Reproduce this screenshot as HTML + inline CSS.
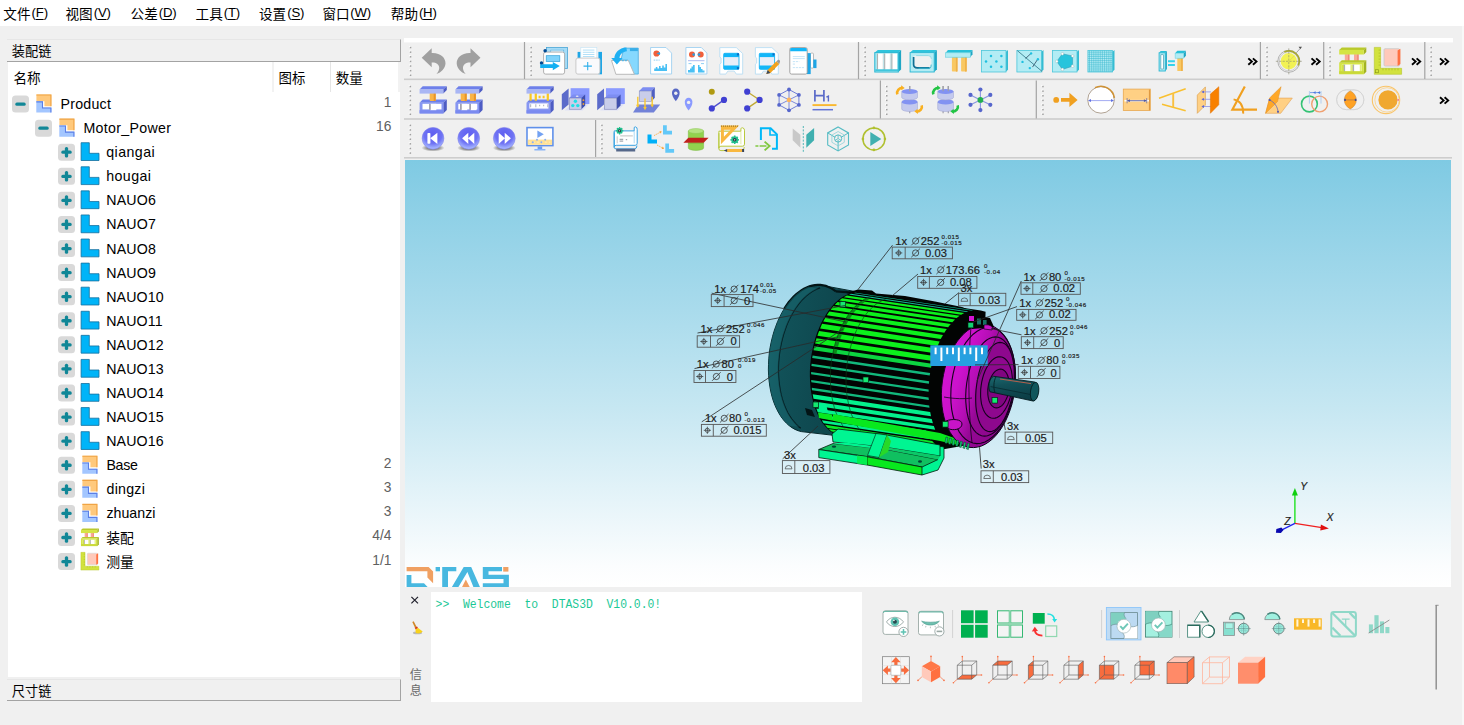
<!DOCTYPE html>
<html><head><meta charset="utf-8"><title>DTAS3D</title>
<style>
html,body{margin:0;padding:0;}
body{width:1464px;height:725px;overflow:hidden;background:#f0f0f0;position:relative;font-family:"Liberation Sans",sans-serif;font-size:13.4px;color:#000;}
.abs{position:absolute;}
#menubar{position:absolute;left:0;top:0;width:1464px;height:25.5px;background:#fff;}
.mi{position:absolute;top:5.2px;font-size:13.2px;line-height:16px;letter-spacing:-0.2px;white-space:nowrap;}
.mi u{text-decoration-thickness:1px;text-underline-offset:1.5px;}
#dock-title{position:absolute;left:7px;top:39px;width:393px;height:21px;background:#f0f0f0;border-bottom:1.5px solid #a3a3a3;border-right:1px solid #a3a3a3;border-top:1px solid #e6e6e6;box-sizing:content-box;}
#tree{position:absolute;left:8px;top:62px;width:392px;height:615px;background:#fff;}
#dock-title2{position:absolute;left:7px;top:679px;width:393px;height:20px;background:#f0f0f0;border-bottom:1.5px solid #a3a3a3;border-right:1px solid #a3a3a3;border-top:1px solid #e6e6e6;}
.tl{position:absolute;font-size:14.2px;line-height:18px;white-space:nowrap;color:#000;}
.tn{position:absolute;right:1072.6px;font-size:13.8px;line-height:18px;color:#606060;white-space:nowrap;}
#viewport{position:absolute;left:405px;top:160px;width:1046px;height:427px;background:linear-gradient(180deg,#7fcae3 0%,#8ed0e6 12%,#a9dbec 35%,#c6e7f2 58%,#e6f4f9 80%,#fbfdfe 95%,#ffffff 100%);overflow:hidden;}
#console{position:absolute;left:431px;top:591.5px;width:431px;height:110px;background:#fff;}
#console span{position:absolute;left:4.6px;top:5.4px;font-family:"Liberation Mono",monospace;font-size:11.4px;line-height:12px;color:#1cc896;white-space:pre;transform:scaleY(1.2);transform-origin:0 0;}
svg{position:absolute;left:0;top:0;overflow:visible;}
</style></head><body>
<div class="abs" style="left:1462px;top:26px;width:2px;height:699px;background:#f8f8f8"></div>
<div id="menubar"><span class="mi" style="left:31.6px">(<u>F</u>)</span><span class="mi" style="left:93.7px">(<u>V</u>)</span><span class="mi" style="left:158.7px">(<u>D</u>)</span><span class="mi" style="left:223.7px">(<u>T</u>)</span><span class="mi" style="left:287.2px">(<u>S</u>)</span><span class="mi" style="left:350.2px">(<u>W</u>)</span><span class="mi" style="left:418.9px">(<u>H</u>)</span></div>
<div id="dock-title"></div>
<div id="tree"></div>
<div id="dock-title2"></div>
<div id="viewport">
<svg width="1046" height="427" viewBox="405 160 1046 427" style="position:absolute;left:0;top:0"><defs>
<linearGradient id="gcov" x1="0" y1="0" x2="1" y2="0.15"><stop offset="0" stop-color="#176067"/><stop offset="0.18" stop-color="#115158"/><stop offset="0.6" stop-color="#0e464d"/><stop offset="1" stop-color="#0b3c43"/></linearGradient>
<linearGradient id="gfl" x1="0" y1="0.15" x2="1" y2="0.7"><stop offset="0" stop-color="#d416d4"/><stop offset="0.3" stop-color="#cc12cc"/><stop offset="0.48" stop-color="#b40eb4"/><stop offset="0.6" stop-color="#940894"/><stop offset="1" stop-color="#880688"/></linearGradient>
<linearGradient id="gfl2" x1="0" y1="0" x2="1" y2="1"><stop offset="0" stop-color="#b40cb4"/><stop offset="0.5" stop-color="#900890"/><stop offset="1" stop-color="#840684"/></linearGradient>
<linearGradient id="gsh" x1="0" y1="0" x2="0.25" y2="1"><stop offset="0" stop-color="#1d6a70"/><stop offset="0.4" stop-color="#125058"/><stop offset="1" stop-color="#0c3e46"/></linearGradient>
</defs>
<path d="M819.3 284.9 L816.0 285.0 L812.7 285.5 L809.3 286.4 L806.0 287.8 L802.7 289.5 L799.5 291.7 L796.3 294.2 L793.2 297.2 L790.3 300.4 L787.4 304.0 L784.7 308.0 L782.2 312.2 L779.9 316.7 L777.7 321.4 L775.8 326.3 L774.0 331.4 L772.5 336.7 L771.2 342.1 L770.1 347.6 L769.3 353.2 L768.8 358.8 L768.5 364.4 L768.4 369.9 L768.6 375.4 L769.1 380.8 L769.8 386.1 L770.7 391.2 L771.9 396.1 L773.3 400.8 L775.0 405.3 L776.9 409.5 L779.0 413.4 L781.2 416.9 L783.7 420.2 L786.3 423.0 L789.1 425.6 L792.0 427.7 L795.0 429.4 L798.1 430.7 L801.3 431.6 L844.7 436.6 L847.9 436.5 L851.0 436.0 L854.2 435.1 L857.3 433.7 L860.4 432.0 L863.5 429.9 L866.5 427.3 L869.4 424.5 L872.2 421.3 L874.9 417.7 L877.4 413.9 L879.8 409.7 L882.1 405.3 L884.1 400.7 L886.0 395.8 L887.7 390.8 L889.1 385.6 L890.4 380.3 L891.4 374.9 L892.2 369.5 L892.7 364.0 L893.1 358.5 L893.1 353.1 L893.0 347.7 L892.6 342.4 L891.9 337.3 L891.0 332.3 L889.9 327.5 L888.6 322.9 L887.1 318.5 L885.3 314.4 L883.4 310.6 L881.3 307.1 L879.0 304.0 L876.5 301.2 L873.9 298.7 L871.2 296.7 L868.3 295.0 L865.4 293.7 L862.4 292.9 Z" fill="url(#gcov)" stroke="#06282c" stroke-width="1"/>
<path d="M835.8 291.3 L833.4 289.6 L830.9 288.1 L828.4 286.9 L825.8 285.9 L823.1 285.3 L820.4 284.9 L817.7 284.9 L815.0 285.1 L812.2 285.6 L809.5 286.4 L806.7 287.4 L804.0 288.8 L801.3 290.4 L798.7 292.3 L796.1 294.4 L793.5 296.8 L791.1 299.5 L788.7 302.3 L786.5 305.4 L784.3 308.7" fill="none" stroke="#031416" stroke-width="2.2"/>
<path d="M835.8 291.3 L864.4 293.4" stroke="#031416" stroke-width="2.2"/>
<path d="M820.1 287.9 L817.3 288.9 L814.5 290.2 L811.8 291.8 L809.0 293.7 L806.4 295.8 L803.8 298.2 L801.2 300.9 L798.8 303.8 L796.4 307.0 L794.2 310.4 L792.1 314.0 L790.1 317.7 L788.2 321.7 L786.5 325.8 L785.0 330.1 L783.5 334.5 L782.3 339.0 L781.2 343.6 L780.3 348.2 L779.6 352.9 L779.0 357.7 L778.6 362.4 L778.4 367.1 L778.4 371.9 L778.6 376.5 L778.9 381.1 L779.5 385.6 L780.2 390.0 L781.0 394.2 L782.1 398.4 L783.3 402.3 L784.7 406.1 L786.3 409.7 L787.9 413.1 L789.8 416.2 L791.8 419.1 L793.9 421.8 L796.1 424.2 L798.4 426.4 L800.8 428.2" fill="none" stroke="#041c20" stroke-width="1.3"/>
<path d="M808.4 286.8 L805.6 287.9 L802.9 289.4 L800.3 291.1 L797.7 293.1 L795.1 295.3 L792.6 297.8 L790.2 300.5 L787.9 303.4 L785.6 306.6 L783.5 309.9 L781.5 313.5 L779.6 317.2 L777.8 321.1 L776.2 325.1 L774.7 329.2 L773.4 333.5 L772.2 337.9 L771.2 342.3 L770.3 346.8 L769.6 351.4 L769.0 355.9 L768.6 360.5 L768.4 365.1 L768.4 369.7 L768.5 374.2 L768.8 378.6 L769.3 383.0 L770.0 387.3 L770.8 391.4 L771.7 395.5 L772.9 399.4 L774.1 403.1 L775.6 406.7 L777.2 410.0 L778.9 413.2 L780.7 416.2 L782.7 418.9 L784.7 421.4 L786.9 423.7 L789.2 425.7 L798.9 426.8 L796.7 424.8 L794.5 422.6 L792.5 420.1 L790.5 417.4 L788.7 414.4 L787.0 411.3 L785.5 407.9 L784.1 404.4 L782.8 400.7 L781.7 396.8 L780.7 392.8 L779.9 388.6 L779.3 384.4 L778.8 380.0 L778.5 375.6 L778.4 371.1 L778.4 366.6 L778.6 362.0 L779.0 357.5 L779.6 352.9 L780.3 348.4 L781.1 343.9 L782.2 339.5 L783.3 335.2 L784.7 330.9 L786.2 326.8 L787.8 322.8 L789.5 319.0 L791.4 315.3 L793.4 311.7 L795.5 308.4 L797.7 305.3 L800.0 302.3 L802.4 299.6 L804.8 297.2 L807.4 295.0 L810.0 293.0 L812.6 291.3 L815.3 289.8 L818.0 288.7 Z" fill="#1a6a72" opacity="0.5"/>
<path d="M860.3 292.5 L857.1 292.4 L853.9 292.6 L850.6 293.4 L847.3 294.5 L844.1 296.1 L840.9 298.1 L837.8 300.5 L834.7 303.3 L831.8 306.5 L829.0 310.1 L826.3 314.0 L823.8 318.2 L821.4 322.6 L819.3 327.4 L817.3 332.3 L815.5 337.5 L814.0 342.8 L812.7 348.3 L811.6 353.9 L810.8 359.5 L810.2 365.2 L809.9 370.8 L809.9 376.4 L810.1 382.0 L810.5 387.4 L811.2 392.7 L812.2 397.8 L813.4 402.8 L814.8 407.4 L816.5 411.8 L818.4 416.0 L820.4 419.8 L822.7 423.2 L825.2 426.3 L827.8 429.1 L830.5 431.4 L833.4 433.3 L836.4 434.8 L839.5 435.8 L842.7 436.5 L905.0 447.0 L945.0 449.0 L962.0 446.0 L978.0 440.0 L985.0 330.0 L985.6 311.7 L980.8 310.5 Z" fill="#020403"/>
<path d="M846 293 L858 289.5 L872 290.5 L876 293.5 L905 296 L935 301.5 L962 307 L974 312 L978 320 L960 318 L900 304 Z" fill="#020403"/>
<path d="M855.7 292.7 L973.1 310.3 L971.3 310.6 L853.8 293.1 Z" fill="#14c8a0"/>
<path d="M850.9 293.8 L968.4 311.4 L966.5 312.0 L849.0 294.5 Z" fill="#14c8a0"/>
<path d="M846.8 295.5 L964.3 313.0 L961.2 314.8 L843.7 297.2 Z" fill="#0cf01c"/>
<path d="M866.1 298.4 L869.7 298.9 L866.6 300.6 L863.0 300.1 Z" fill="#0a8a18"/>
<path d="M842.1 298.3 L959.6 315.8 L956.6 318.1 L839.2 300.6 Z" fill="#0cf01c"/>
<path d="M861.4 301.1 L865.0 301.7 L862.1 304.0 L858.4 303.4 Z" fill="#0a8a18"/>
<path d="M837.6 301.9 L955.1 319.4 L952.3 322.3 L834.8 304.7 Z" fill="#0cf01c"/>
<path d="M856.9 304.8 L860.5 305.3 L857.7 308.1 L854.1 307.6 Z" fill="#0a8a18"/>
<path d="M833.3 306.3 L950.8 323.9 L948.1 327.2 L830.6 309.7 Z" fill="#0cf01c"/>
<path d="M852.6 309.2 L856.2 309.7 L853.5 313.1 L849.9 312.5 Z" fill="#0a8a18"/>
<path d="M829.3 311.5 L946.8 329.0 L944.3 332.8 L826.8 315.3 Z" fill="#0cf01c"/>
<path d="M848.6 314.4 L852.2 314.9 L849.7 318.7 L846.1 318.2 Z" fill="#0a8a18"/>
<path d="M825.5 317.4 L943.0 334.9 L940.7 339.1 L823.2 321.6 Z" fill="#0cf01c"/>
<path d="M844.8 320.2 L848.4 320.8 L846.1 325.0 L842.5 324.5 Z" fill="#0a8a18"/>
<path d="M822.1 323.8 L939.6 341.4 L937.6 346.0 L820.1 328.4 Z" fill="#0cf01c"/>
<path d="M841.4 326.7 L845.0 327.3 L843.0 331.8 L839.4 331.3 Z" fill="#0a8a18"/>
<path d="M819.1 330.9 L936.6 348.4 L934.9 353.3 L817.4 335.7 Z" fill="#0cf01c"/>
<path d="M838.4 333.7 L842.0 334.3 L840.3 339.1 L836.6 338.6 Z" fill="#0a8a18"/>
<path d="M816.5 338.3 L934.0 355.9 L932.6 361.0 L815.1 343.4 Z" fill="#0cf01c"/>
<path d="M835.8 341.2 L839.4 341.7 L838.0 346.8 L834.4 346.3 Z" fill="#0a8a18"/>
<path d="M814.4 346.2 L931.9 363.8 L931.0 367.8 L813.5 350.2 Z" fill="#0cd440"/>
<path d="M833.7 349.1 L837.3 349.7 L836.4 353.7 L832.8 353.1 Z" fill="#0a8a18"/>
<path d="M812.6 355.5 L930.1 373.0 L929.7 375.5 L812.2 357.9 Z" fill="#12b87c"/>
<path d="M811.6 363.7 L929.1 381.2 L928.9 383.7 L811.4 366.1 Z" fill="#12b87c"/>
<path d="M811.1 371.9 L928.6 389.4 L928.6 391.8 L811.1 374.3 Z" fill="#12b87c"/>
<path d="M811.2 379.9 L928.6 397.5 L928.8 399.9 L811.3 382.3 Z" fill="#12b87c"/>
<path d="M811.8 387.8 L929.2 405.4 L929.5 407.7 L812.0 390.2 Z" fill="#12b87c"/>
<path d="M812.7 394.3 L930.2 411.9 L931.0 416.3 L813.5 398.7 Z" fill="#04f08c"/>
<path d="M814.2 401.6 L931.7 419.1 L932.9 423.3 L815.4 405.7 Z" fill="#04f08c"/>
<path d="M816.3 408.4 L933.8 425.9 L935.2 429.7 L817.7 412.2 Z" fill="#04f08c"/>
<path d="M818.8 414.6 L926.1 430.6 L927.8 434.1 L820.5 418.0 Z" fill="#04f08c"/>
<path d="M821.8 420.2 L929.0 436.2 L931.0 439.2 L823.7 423.2 Z" fill="#04f08c"/>
<path d="M825.0 424.8 L932.2 440.9 L935.0 444.0 L827.7 428.0 Z" fill="#0ae828"/>
<path d="M828.7 429.0 L893.7 438.7 L896.7 441.2 L831.6 431.5 Z" fill="#0ae828"/>
<path d="M832.7 432.3 L897.7 442.0 L900.9 443.9 L835.9 434.2 Z" fill="#0ae828"/>
<path d="M874.6 295.7 L871.2 296.4 L867.7 297.6 L864.3 299.3 L860.9 301.5 L857.6 304.1 L854.5 307.2 L851.4 310.7 L848.5 314.5 L845.7 318.8 L843.1 323.4 L840.7 328.2 L838.5 333.4 L836.6 338.8 L834.9 344.4 L833.5 350.1 L832.3 356.0 L831.4 361.9 L830.7 367.9 L830.4 373.9 L830.4 379.8 L830.6 385.7 L831.1 391.4 L831.9 397.0 L833.0 402.3 L834.3 407.5 L835.9 412.3 L837.8 416.9 L839.9 421.0 L842.2 424.9 L844.7 428.3" fill="none" stroke="#0a3a14" stroke-width="0.8" opacity="0.8"/>
<path d="M890.3 298.0 L886.8 298.7 L883.4 300.0 L880.0 301.7 L876.6 303.8 L873.3 306.5 L870.1 309.5 L867.0 313.0 L864.1 316.9 L861.3 321.1 L858.8 325.7 L856.4 330.6 L854.2 335.7 L852.3 341.1 L850.6 346.7 L849.1 352.5 L847.9 358.3 L847.0 364.3 L846.4 370.2 L846.1 376.2 L846.0 382.2 L846.3 388.0 L846.8 393.8 L847.6 399.3 L848.7 404.7 L850.0 409.8 L851.6 414.7 L853.5 419.2 L855.6 423.4 L857.9 427.2 L860.4 430.7" fill="none" stroke="#0a3a14" stroke-width="0.8" opacity="0.8"/>
<path d="M905 440 L944 447 L944 458 L938 470 L922 475 L905 460 Z" fill="#00f592" stroke="#021a0c" stroke-width="0.8"/>
<path d="M832 434 L838 429 L884 434.5 L940 445 L940 456 L884 447 L833 442 Z" fill="#00f592" stroke="#021a0c" stroke-width="0.8"/>
<path d="M818.8 449.5 L833 443.5 L884 449 L938 459.5 L922 467 L867 456.5 Z" fill="#10c060" stroke="#021a0c" stroke-width="0.8"/>
<path d="M833 443.5 L845 442.5 L884 447.5 L884 449.5 Z" fill="#00f592"/>
<path d="M818.8 449.5 L867 456.8 L867 465 L818.8 457.6 Z" fill="#00f592" stroke="#021a0c" stroke-width="0.8"/>
<path d="M867 456.8 L922 467 L922 475 L867 465 Z" fill="#08e81e" stroke="#021a0c" stroke-width="0.8"/>
<path d="M857 455.4 L867 456.8 L867 465 L857 463.4 Z" fill="#04ee50"/>
<path d="M884 447 L940 456 L938 459.5 L884 449 Z" fill="#0cc868"/>
<path d="M867.5 455.5 L876 433.5 L887 435 L879 457.5 Z" fill="#00f592" stroke="#021a0c" stroke-width="0.6"/>
<path d="M879 457.5 L887 435 L891 441 L888 452 Z" fill="#28d828"/>
<ellipse cx="834" cy="446.6" rx="2.2" ry="1.2" fill="#043"/><ellipse cx="920" cy="461.5" rx="2" ry="1.2" fill="#043"/>
<path d="M833 414 L846 416.5 L940 433 L960 440 L958 445 L940 441 L845 423.5 L832 420.5 Z" fill="#08e81e"/>
<path d="M818 403.5 L826 404 L828 412 L819 411 Z" fill="#00f592"/><path d="M818 412.5 L832 414.5 L832 420.5 L819 418 Z" fill="#08e81e"/>
<path d="M805 408 L812 410 L815 417 L807 415 Z" fill="#031416"/>
<path d="M1014.6 391.1 L1013.5 397.5 L1012.1 403.7 L1010.2 409.8 L1008.0 415.6 L1005.5 421.1 L1002.7 426.2 L999.6 430.9 L996.3 435.0 L992.8 438.7 L989.1 441.7 L985.3 444.2 L981.5 446.0 L977.6 447.1 L973.7 447.6 L969.9 447.4 L966.1 446.5 L962.5 445.0 L959.1 442.8 L955.9 440.0 L953.0 436.6 L950.3 432.7 L947.9 428.2 L945.9 423.3 L944.2 418.0 L942.9 412.3 L942.0 406.3 L941.5 400.1 L941.4 393.8 L941.7 387.4 L942.4 380.9 L943.5 374.5 L944.9 368.3 L946.8 362.2 L949.0 356.4 L951.5 350.9 L954.3 345.8 L957.4 341.1 L960.7 337.0 L964.2 333.3 L967.9 330.3 L971.7 327.8 L975.5 326.0 L979.4 324.9 L983.3 324.4 L987.1 324.6 L990.9 325.5 L994.5 327.0 L997.9 329.2 L1001.1 332.0 L1004.0 335.4 L1006.7 339.3 L1009.1 343.8 L1011.1 348.7 L1012.8 354.0 L1014.1 359.7 L1015.0 365.7 L1015.5 371.9 L1015.6 378.2 L1015.3 384.6 L1014.6 391.1 Z" fill="url(#gfl)" stroke="#12021a" stroke-width="1"/>
<path d="M946.0 437.0 l2 0.6 l-1.2 6 l-2 -0.6 Z" fill="#14c070" stroke="#021" stroke-width="0.4"/>
<path d="M949.6 438.0 l2 0.6 l-1.2 6 l-2 -0.6 Z" fill="#14c070" stroke="#021" stroke-width="0.4"/>
<path d="M953.2 439.0 l2 0.6 l-1.2 6 l-2 -0.6 Z" fill="#14c070" stroke="#021" stroke-width="0.4"/>
<path d="M956.8 440.0 l2 0.6 l-1.2 6 l-2 -0.6 Z" fill="#14c070" stroke="#021" stroke-width="0.4"/>
<path d="M960.4 441.0 l2 0.6 l-1.2 6 l-2 -0.6 Z" fill="#14c070" stroke="#021" stroke-width="0.4"/>
<path d="M964.0 442.0 l2 0.6 l-1.2 6 l-2 -0.6 Z" fill="#14c070" stroke="#021" stroke-width="0.4"/>
<path d="M967.6 443.0 l2 0.6 l-1.2 6 l-2 -0.6 Z" fill="#14c070" stroke="#021" stroke-width="0.4"/>
<path d="M1014.2 389.9 L1012.9 397.1 L1011.2 404.2 L1009.0 410.9 L1006.4 417.3 L1003.5 423.1 L1000.2 428.4 L996.6 432.9 L992.8 436.8 L988.9 439.8 L984.9 442.0 L980.8 443.2 L976.8 443.6 L972.9 443.0 L969.2 441.6 L965.6 439.2 L962.4 436.1 L959.4 432.1 L956.8 427.3 L954.7 422.0 L953.0 416.0 L951.7 409.6 L951.0 402.7 L950.8 395.7 L951.0 388.4 L951.8 381.1 L953.1 373.9 L954.8 366.8 L957.0 360.1 L959.6 353.7 L962.5 347.9 L965.8 342.6 L969.4 338.1 L973.2 334.2 L977.1 331.2 L981.1 329.0 L985.2 327.8 L989.2 327.4 L993.1 328.0 L996.8 329.4 L1000.4 331.8 L1003.6 334.9 L1006.6 338.9 L1009.2 343.7 L1011.3 349.0 L1013.0 355.0 L1014.3 361.4 L1015.0 368.3 L1015.2 375.3 L1015.0 382.6 L1014.2 389.9 Z" fill="none" stroke="#14021c" stroke-width="1.1"/>
<path d="M1013.3 389.8 L1012.2 396.0 L1010.8 402.0 L1009.1 407.8 L1007.0 413.2 L1004.7 418.2 L1002.2 422.8 L999.5 426.7 L996.6 430.1 L993.6 432.7 L990.6 434.6 L987.5 435.7 L984.5 436.1 L981.6 435.7 L978.8 434.5 L976.2 432.6 L973.8 429.9 L971.7 426.6 L969.8 422.6 L968.3 418.0 L967.1 413.0 L966.3 407.5 L965.8 401.7 L965.7 395.6 L966.0 389.5 L966.7 383.2 L967.8 377.0 L969.2 371.0 L970.9 365.2 L973.0 359.8 L975.3 354.8 L977.8 350.2 L980.5 346.3 L983.4 342.9 L986.4 340.3 L989.4 338.4 L992.5 337.3 L995.5 336.9 L998.4 337.3 L1001.2 338.5 L1003.8 340.4 L1006.2 343.1 L1008.3 346.4 L1010.2 350.4 L1011.7 355.0 L1012.9 360.0 L1013.7 365.5 L1014.2 371.3 L1014.3 377.4 L1014.0 383.5 L1013.3 389.8 Z" fill="none" stroke="#14021c" stroke-width="1.1"/>
<path d="M1013.3 389.6 L1012.4 395.1 L1011.2 400.6 L1009.7 405.8 L1008.0 410.7 L1006.1 415.3 L1004.1 419.4 L1001.9 423.0 L999.5 426.0 L997.1 428.4 L994.7 430.2 L992.3 431.3 L989.9 431.6 L987.6 431.3 L985.4 430.3 L983.4 428.6 L981.5 426.2 L979.9 423.2 L978.5 419.7 L977.4 415.6 L976.5 411.1 L975.9 406.2 L975.7 401.0 L975.7 395.6 L976.0 390.0 L976.7 384.4 L977.6 378.9 L978.8 373.4 L980.3 368.2 L982.0 363.3 L983.9 358.7 L985.9 354.6 L988.1 351.0 L990.5 348.0 L992.9 345.6 L995.3 343.8 L997.7 342.7 L1000.1 342.4 L1002.4 342.7 L1004.6 343.7 L1006.6 345.4 L1008.5 347.8 L1010.1 350.8 L1011.5 354.3 L1012.6 358.4 L1013.5 362.9 L1014.1 367.8 L1014.3 373.0 L1014.3 378.4 L1014.0 384.0 L1013.3 389.6 Z" fill="#8e088e" stroke="#14021c" stroke-width="1.1"/>
<path d="M1011.8 389.7 L1011.2 393.5 L1010.3 397.2 L1009.2 400.8 L1007.9 404.2 L1006.4 407.3 L1004.7 410.1 L1003.0 412.5 L1001.1 414.6 L999.1 416.2 L997.1 417.4 L995.1 418.1 L993.2 418.3 L991.2 418.0 L989.4 417.3 L987.7 416.0 L986.1 414.4 L984.6 412.3 L983.4 409.8 L982.4 406.9 L981.5 403.8 L981.0 400.4 L980.6 396.8 L980.6 393.0 L980.7 389.2 L981.2 385.3 L981.8 381.5 L982.7 377.8 L983.8 374.2 L985.1 370.8 L986.6 367.7 L988.3 364.9 L990.0 362.5 L991.9 360.4 L993.9 358.8 L995.9 357.6 L997.9 356.9 L999.8 356.7 L1001.8 357.0 L1003.6 357.7 L1005.3 359.0 L1006.9 360.6 L1008.4 362.7 L1009.6 365.2 L1010.6 368.1 L1011.5 371.2 L1012.0 374.6 L1012.4 378.2 L1012.4 382.0 L1012.3 385.8 L1011.8 389.7 Z" fill="none" stroke="#14021c" stroke-width="1.1"/>
<path d="M1008.9 390.0 L1008.5 392.4 L1007.9 394.7 L1007.2 397.0 L1006.3 399.1 L1005.3 401.0 L1004.2 402.8 L1003.0 404.3 L1001.8 405.6 L1000.5 406.6 L999.1 407.3 L997.8 407.7 L996.4 407.9 L995.1 407.7 L993.9 407.2 L992.7 406.4 L991.6 405.4 L990.6 404.0 L989.8 402.4 L989.1 400.7 L988.5 398.7 L988.1 396.5 L987.8 394.2 L987.8 391.9 L987.8 389.5 L988.1 387.0 L988.5 384.6 L989.1 382.3 L989.8 380.0 L990.7 377.9 L991.7 376.0 L992.8 374.2 L994.0 372.7 L995.2 371.4 L996.5 370.4 L997.9 369.7 L999.2 369.3 L1000.6 369.1 L1001.9 369.3 L1003.1 369.8 L1004.3 370.6 L1005.4 371.6 L1006.4 373.0 L1007.2 374.6 L1007.9 376.3 L1008.5 378.3 L1008.9 380.5 L1009.2 382.8 L1009.2 385.1 L1009.2 387.5 L1008.9 390.0 Z" fill="#800680" stroke="#14021c" stroke-width="1.1"/>
<path d="M971 327 C968 360 968 410 972 443 M944 397 C955 399 965 399 972 398" stroke="#14021c" stroke-width="0.8" fill="none"/>
<path d="M946 421 C952 418.5 962 419 962 424 C962 429.5 953 431 948 428.5 Z" fill="#c814c8" stroke="#14021c" stroke-width="1"/>
<rect x="840" y="301.5" width="5.6" height="5.6" fill="#14e870" stroke="#021" stroke-width="0.7"/>
<rect x="863" y="377" width="5.6" height="5.6" fill="#14e870" stroke="#021" stroke-width="0.7"/>
<rect x="813" y="402" width="5.6" height="5.6" fill="#14e870" stroke="#021" stroke-width="0.7"/>
<rect x="942.5" y="421.5" width="5.6" height="5.6" fill="#14e870" stroke="#021" stroke-width="0.7"/>
<rect x="992" y="397.5" width="5.6" height="5.6" fill="#14e870" stroke="#021" stroke-width="0.7"/>
<path d="M966 313 L990 318 L994 327 L972 329 Z" fill="#020403"/>
<rect x="969" y="316" width="5" height="5" fill="#d414d4"/><rect x="968" y="322.5" width="5.4" height="5.4" fill="#14d070" stroke="#021" stroke-width="0.6"/><rect x="977" y="318.5" width="4" height="6" fill="#157060"/><rect x="983" y="320" width="3.6" height="5" fill="#157060"/>
<path d="M984 325 C990 324 994 327 992 330 L984 329 Z" fill="#c814c8" stroke="#14021c" stroke-width="0.7"/>
<path d="M993.5 376.3 L1034.6 382 C1039.6 384 1039.2 400 1033 401 L990 391.8 C987.6 388 989 378 993.5 376.3 Z" fill="url(#gsh)" stroke="#031a1e" stroke-width="0.9"/>
<ellipse cx="1034.6" cy="391.6" rx="4.1" ry="9.4" transform="rotate(8 1034.6 391.6)" fill="#10565c" stroke="#031a1e" stroke-width="0.8"/>
<path d="M996 376.8 C993.6 381 993.2 388 995 392.6" fill="none" stroke="#031a1e" stroke-width="0.8"/>
<path d="M1000 379 L1031 383.6" stroke="#b4604c" stroke-width="1"/>
<path d="M990.6 386.6 L1031 394.6" stroke="#062a30" stroke-width="0.8"/>
<rect x="930.3" y="345.3" width="57.4" height="20.7" fill="#27a0e0"/>
<rect x="934.6" y="347.6" width="2" height="6.6" fill="#fff"/>
<rect x="940.4" y="347.6" width="2" height="13.4" fill="#fff"/>
<rect x="946.2" y="347.6" width="2" height="6.6" fill="#fff"/>
<rect x="952.0" y="347.6" width="2" height="6.6" fill="#fff"/>
<rect x="957.8" y="347.6" width="2" height="13.4" fill="#fff"/>
<rect x="963.6" y="347.6" width="2" height="6.6" fill="#fff"/>
<rect x="969.4" y="347.6" width="2" height="6.6" fill="#fff"/>
<rect x="975.2" y="347.6" width="2" height="13.4" fill="#fff"/>
<rect x="981.0" y="347.6" width="2" height="6.6" fill="#fff"/>
<g font-family="Liberation Sans, sans-serif">
<path d="M711.7 293.2 L846 322" stroke="#2a2a2a" stroke-width="0.8" fill="none"/>
<path d="M697.5 333 L845 305.5" stroke="#2a2a2a" stroke-width="0.8" fill="none"/>
<path d="M694.5 368.6 L838 336.8" stroke="#2a2a2a" stroke-width="0.8" fill="none"/>
<path d="M701.8 421.8 L843 329" stroke="#2a2a2a" stroke-width="0.8" fill="none"/>
<path d="M892.5 245.2 L858 289.5" stroke="#2a2a2a" stroke-width="0.8" fill="none"/>
<path d="M918 274 L892.2 295.8" stroke="#2a2a2a" stroke-width="0.8" fill="none"/>
<path d="M959 292.6 L945 303.8" stroke="#2a2a2a" stroke-width="0.8" fill="none"/>
<path d="M1021.3 281 L977 381" stroke="#2a2a2a" stroke-width="0.8" fill="none"/>
<path d="M1017 306.6 L972 322.5" stroke="#2a2a2a" stroke-width="0.8" fill="none"/>
<path d="M1021.5 334.8 L1002.4 331" stroke="#2a2a2a" stroke-width="0.8" fill="none"/>
<path d="M1002.4 331 L991 328.6" stroke="#2a2a2a" stroke-width="0.8" fill="none"/>
<path d="M1018.5 364.6 L975 364.9" stroke="#2a2a2a" stroke-width="0.8" fill="none"/>
<path d="M1005.3 429.9 L1003.9 422.4" stroke="#2a2a2a" stroke-width="0.8" fill="none"/>
<path d="M981.2 468.6 L979.5 447.2" stroke="#2a2a2a" stroke-width="0.8" fill="none"/>
<path d="M782.6 458.9 L818 426" stroke="#2a2a2a" stroke-width="0.8" fill="none"/>
<text x="714.2" y="293" font-size="11.2" text-anchor="start" fill="#202020" stroke="#202020" stroke-width="0.18" >1x</text>
<circle cx="734.0999999999999" cy="289.1" r="3.1" fill="none" stroke="#333" stroke-width="0.8"/><path d="M729.8 293.4 L738.4 284.8" stroke="#333" stroke-width="0.8"/>
<text x="740.2" y="293" font-size="11.2" text-anchor="start" fill="#202020" stroke="#202020" stroke-width="0.18" >174</text>
<text x="760" y="287.0" font-size="6.1" text-anchor="start" fill="#202020" stroke="#202020" stroke-width="0.18" letter-spacing="0.55">0.01</text>
<text x="760" y="292.9" font-size="6.1" text-anchor="start" fill="#202020" stroke="#202020" stroke-width="0.18" letter-spacing="0.55">-0.05</text>
<rect x="711.3" y="294.6" width="41.7" height="12.0" fill="none" stroke="#555" stroke-width="0.9"/><path d="M724.1 294.6 V306.6" stroke="#555" stroke-width="0.9"/>
<circle cx="717.7" cy="300.6" r="2.1" fill="none" stroke="#333" stroke-width="0.7"/><path d="M714.1 300.6 H721.3000000000001 M717.7 297.0 V304.20000000000005" stroke="#333" stroke-width="0.7"/>
<circle cx="734.1999999999999" cy="300.6" r="3.1" fill="none" stroke="#333" stroke-width="0.8"/><path d="M729.9 304.9 L738.5 296.3" stroke="#333" stroke-width="0.8"/>
<text x="744" y="304.70000000000005" font-size="11.2" text-anchor="start" fill="#202020" stroke="#202020" stroke-width="0.18" >0</text>
<text x="700.5" y="332.7" font-size="11.2" text-anchor="start" fill="#202020" stroke="#202020" stroke-width="0.18" >1x</text>
<circle cx="720.3" cy="328.8" r="3.1" fill="none" stroke="#333" stroke-width="0.8"/><path d="M716.0 333.1 L724.6 324.5" stroke="#333" stroke-width="0.8"/>
<text x="726" y="332.7" font-size="11.2" text-anchor="start" fill="#202020" stroke="#202020" stroke-width="0.18" >252</text>
<text x="747" y="326.7" font-size="6.1" text-anchor="start" fill="#202020" stroke="#202020" stroke-width="0.18" letter-spacing="0.55">0.046</text>
<text x="747" y="332.59999999999997" font-size="6.1" text-anchor="start" fill="#202020" stroke="#202020" stroke-width="0.18" letter-spacing="0.55">0</text>
<rect x="697.2" y="335.8" width="42.4" height="11.4" fill="none" stroke="#555" stroke-width="0.9"/><path d="M710.5 335.8 V347.2" stroke="#555" stroke-width="0.9"/>
<circle cx="703.85" cy="341.5" r="2.1" fill="none" stroke="#333" stroke-width="0.7"/><path d="M700.25 341.5 H707.45 M703.85 337.9 V345.1" stroke="#333" stroke-width="0.7"/>
<circle cx="720.4" cy="341.5" r="3.1" fill="none" stroke="#333" stroke-width="0.8"/><path d="M716.1 345.8 L724.7 337.2" stroke="#333" stroke-width="0.8"/>
<text x="730.5" y="345.3" font-size="11.2" text-anchor="start" fill="#202020" stroke="#202020" stroke-width="0.18" >0</text>
<text x="696.8" y="368" font-size="11.2" text-anchor="start" fill="#202020" stroke="#202020" stroke-width="0.18" >1x</text>
<circle cx="716.1999999999999" cy="364.1" r="3.1" fill="none" stroke="#333" stroke-width="0.8"/><path d="M711.9 368.4 L720.5 359.8" stroke="#333" stroke-width="0.8"/>
<text x="721.6" y="368" font-size="11.2" text-anchor="start" fill="#202020" stroke="#202020" stroke-width="0.18" >80</text>
<text x="738" y="362.0" font-size="6.1" text-anchor="start" fill="#202020" stroke="#202020" stroke-width="0.18" letter-spacing="0.55">0.019</text>
<text x="738" y="367.9" font-size="6.1" text-anchor="start" fill="#202020" stroke="#202020" stroke-width="0.18" letter-spacing="0.55">0</text>
<rect x="694" y="370.5" width="41.9" height="12.0" fill="none" stroke="#555" stroke-width="0.9"/><path d="M705.5 370.5 V382.5" stroke="#555" stroke-width="0.9"/>
<circle cx="699.75" cy="376.5" r="2.1" fill="none" stroke="#333" stroke-width="0.7"/><path d="M696.15 376.5 H703.35 M699.75 372.9 V380.1" stroke="#333" stroke-width="0.7"/>
<circle cx="716.4" cy="376.5" r="3.1" fill="none" stroke="#333" stroke-width="0.8"/><path d="M712.1 380.8 L720.7 372.2" stroke="#333" stroke-width="0.8"/>
<text x="726.8" y="380.6" font-size="11.2" text-anchor="start" fill="#202020" stroke="#202020" stroke-width="0.18" >0</text>
<text x="704.9" y="422.2" font-size="11.2" text-anchor="start" fill="#202020" stroke="#202020" stroke-width="0.18" >1x</text>
<circle cx="724.1999999999999" cy="418.3" r="3.1" fill="none" stroke="#333" stroke-width="0.8"/><path d="M719.9 422.6 L728.5 414.0" stroke="#333" stroke-width="0.8"/>
<text x="729" y="422.2" font-size="11.2" text-anchor="start" fill="#202020" stroke="#202020" stroke-width="0.18" >80</text>
<text x="744.5" y="416.2" font-size="6.1" text-anchor="start" fill="#202020" stroke="#202020" stroke-width="0.18" letter-spacing="0.55">0</text>
<text x="744.5" y="422.09999999999997" font-size="6.1" text-anchor="start" fill="#202020" stroke="#202020" stroke-width="0.18" letter-spacing="0.55">-0.013</text>
<rect x="701.4" y="424.4" width="64.9" height="11.8" fill="none" stroke="#555" stroke-width="0.9"/><path d="M713.3 424.4 V436.2" stroke="#555" stroke-width="0.9"/>
<circle cx="707.3499999999999" cy="430.29999999999995" r="2.1" fill="none" stroke="#333" stroke-width="0.7"/><path d="M703.7499999999999 430.29999999999995 H710.9499999999999 M707.3499999999999 426.69999999999993 V433.9" stroke="#333" stroke-width="0.7"/>
<circle cx="724.1999999999999" cy="430.29999999999995" r="3.1" fill="none" stroke="#333" stroke-width="0.8"/><path d="M719.9 434.6 L728.5 426.0" stroke="#333" stroke-width="0.8"/>
<text x="733.4" y="434.3" font-size="11.2" text-anchor="start" fill="#202020" stroke="#202020" stroke-width="0.18" >0.015</text>
<text x="895.3" y="244.9" font-size="11.2" text-anchor="start" fill="#202020" stroke="#202020" stroke-width="0.18" >1x</text>
<circle cx="915.5999999999999" cy="241.0" r="3.1" fill="none" stroke="#333" stroke-width="0.8"/><path d="M911.3 245.3 L919.9 236.7" stroke="#333" stroke-width="0.8"/>
<text x="920.8" y="244.9" font-size="11.2" text-anchor="start" fill="#202020" stroke="#202020" stroke-width="0.18" >252</text>
<text x="941.5" y="238.9" font-size="6.1" text-anchor="start" fill="#202020" stroke="#202020" stroke-width="0.18" letter-spacing="0.55">0.015</text>
<text x="941.5" y="244.8" font-size="6.1" text-anchor="start" fill="#202020" stroke="#202020" stroke-width="0.18" letter-spacing="0.55">-0.015</text>
<rect x="892.2" y="247.1" width="60.2" height="11.7" fill="none" stroke="#555" stroke-width="0.9"/><path d="M905.2 247.1 V258.8" stroke="#555" stroke-width="0.9"/>
<circle cx="898.7" cy="252.95" r="2.1" fill="none" stroke="#333" stroke-width="0.7"/><path d="M895.1 252.95 H902.3000000000001 M898.7 249.35 V256.55" stroke="#333" stroke-width="0.7"/>
<circle cx="915.5999999999999" cy="252.95" r="3.1" fill="none" stroke="#333" stroke-width="0.8"/><path d="M911.3 257.2 L919.9 248.7" stroke="#333" stroke-width="0.8"/>
<text x="925.1" y="256.90000000000003" font-size="11.2" text-anchor="start" fill="#202020" stroke="#202020" stroke-width="0.18" >0.03</text>
<text x="920.1" y="273.7" font-size="11.2" text-anchor="start" fill="#202020" stroke="#202020" stroke-width="0.18" >1x</text>
<circle cx="940.6999999999999" cy="269.8" r="3.1" fill="none" stroke="#333" stroke-width="0.8"/><path d="M936.4 274.1 L945.0 265.5" stroke="#333" stroke-width="0.8"/>
<text x="945.8" y="273.7" font-size="11.2" text-anchor="start" fill="#202020" stroke="#202020" stroke-width="0.18" >173.66</text>
<text x="984" y="267.7" font-size="6.1" text-anchor="start" fill="#202020" stroke="#202020" stroke-width="0.18" letter-spacing="0.55">0</text>
<text x="984" y="273.59999999999997" font-size="6.1" text-anchor="start" fill="#202020" stroke="#202020" stroke-width="0.18" letter-spacing="0.55">-0.04</text>
<rect x="917.7" y="276.5" width="59.2" height="11.8" fill="none" stroke="#555" stroke-width="0.9"/><path d="M929.4 276.5 V288.3" stroke="#555" stroke-width="0.9"/>
<circle cx="923.55" cy="282.4" r="2.1" fill="none" stroke="#333" stroke-width="0.7"/><path d="M919.9499999999999 282.4 H927.15 M923.55 278.79999999999995 V286.0" stroke="#333" stroke-width="0.7"/>
<circle cx="940.6999999999999" cy="282.4" r="3.1" fill="none" stroke="#333" stroke-width="0.8"/><path d="M936.4 286.7 L945.0 278.1" stroke="#333" stroke-width="0.8"/>
<text x="949.9" y="286.40000000000003" font-size="11.2" text-anchor="start" fill="#202020" stroke="#202020" stroke-width="0.18" >0.08</text>
<text x="960.5" y="292" font-size="11.2" text-anchor="start" fill="#202020" stroke="#202020" stroke-width="0.18" >3x</text>
<rect x="958.6" y="293.3" width="47.2" height="12.4" fill="none" stroke="#555" stroke-width="0.9"/><path d="M970.2 293.3 V305.7" stroke="#555" stroke-width="0.9"/>
<path d="M961.0000000000001 301.3 A3.4 3.4 0 0 1 967.8000000000001 301.3 Z" fill="none" stroke="#444" stroke-width="0.7"/>
<text x="978.5" y="303.8" font-size="11.2" text-anchor="start" fill="#202020" stroke="#202020" stroke-width="0.18" >0.03</text>
<text x="1023.5" y="280.6" font-size="11.2" text-anchor="start" fill="#202020" stroke="#202020" stroke-width="0.18" >1x</text>
<circle cx="1044.0" cy="276.70000000000005" r="3.1" fill="none" stroke="#333" stroke-width="0.8"/><path d="M1039.7 281.0 L1048.3 272.4" stroke="#333" stroke-width="0.8"/>
<text x="1048.9" y="280.6" font-size="11.2" text-anchor="start" fill="#202020" stroke="#202020" stroke-width="0.18" >80</text>
<text x="1064.5" y="274.6" font-size="6.1" text-anchor="start" fill="#202020" stroke="#202020" stroke-width="0.18" letter-spacing="0.55">0</text>
<text x="1064.5" y="280.5" font-size="6.1" text-anchor="start" fill="#202020" stroke="#202020" stroke-width="0.18" letter-spacing="0.55">-0.015</text>
<rect x="1021" y="282.8" width="59.3" height="11.5" fill="none" stroke="#555" stroke-width="0.9"/><path d="M1032.8 282.8 V294.3" stroke="#555" stroke-width="0.9"/>
<circle cx="1026.9" cy="288.55" r="2.1" fill="none" stroke="#333" stroke-width="0.7"/><path d="M1023.3000000000001 288.55 H1030.5 M1026.9 284.95 V292.15000000000003" stroke="#333" stroke-width="0.7"/>
<circle cx="1044.0" cy="288.55" r="3.1" fill="none" stroke="#333" stroke-width="0.8"/><path d="M1039.7 292.9 L1048.3 284.2" stroke="#333" stroke-width="0.8"/>
<text x="1053.3" y="292.40000000000003" font-size="11.2" text-anchor="start" fill="#202020" stroke="#202020" stroke-width="0.18" >0.02</text>
<text x="1019.2" y="306.7" font-size="11.2" text-anchor="start" fill="#202020" stroke="#202020" stroke-width="0.18" >1x</text>
<circle cx="1039.5" cy="302.8" r="3.1" fill="none" stroke="#333" stroke-width="0.8"/><path d="M1035.2 307.1 L1043.8 298.5" stroke="#333" stroke-width="0.8"/>
<text x="1044.6" y="306.7" font-size="11.2" text-anchor="start" fill="#202020" stroke="#202020" stroke-width="0.18" >252</text>
<text x="1066" y="300.7" font-size="6.1" text-anchor="start" fill="#202020" stroke="#202020" stroke-width="0.18" letter-spacing="0.55">0</text>
<text x="1066" y="306.59999999999997" font-size="6.1" text-anchor="start" fill="#202020" stroke="#202020" stroke-width="0.18" letter-spacing="0.55">-0.046</text>
<rect x="1016.7" y="309.4" width="59.3" height="10.9" fill="none" stroke="#555" stroke-width="0.9"/><path d="M1028.7 309.4 V320.3" stroke="#555" stroke-width="0.9"/>
<circle cx="1022.7" cy="314.85" r="2.1" fill="none" stroke="#333" stroke-width="0.7"/><path d="M1019.1 314.85 H1026.3 M1022.7 311.25 V318.45000000000005" stroke="#333" stroke-width="0.7"/>
<circle cx="1039.5" cy="314.85" r="3.1" fill="none" stroke="#333" stroke-width="0.8"/><path d="M1035.2 319.2 L1043.8 310.6" stroke="#333" stroke-width="0.8"/>
<text x="1048.9" y="318.40000000000003" font-size="11.2" text-anchor="start" fill="#202020" stroke="#202020" stroke-width="0.18" >0.02</text>
<text x="1023.7" y="334.6" font-size="11.2" text-anchor="start" fill="#202020" stroke="#202020" stroke-width="0.18" >1x</text>
<circle cx="1044.0" cy="330.70000000000005" r="3.1" fill="none" stroke="#333" stroke-width="0.8"/><path d="M1039.7 335.0 L1048.3 326.4" stroke="#333" stroke-width="0.8"/>
<text x="1049.3" y="334.6" font-size="11.2" text-anchor="start" fill="#202020" stroke="#202020" stroke-width="0.18" >252</text>
<text x="1070" y="328.6" font-size="6.1" text-anchor="start" fill="#202020" stroke="#202020" stroke-width="0.18" letter-spacing="0.55">0.046</text>
<text x="1070" y="334.5" font-size="6.1" text-anchor="start" fill="#202020" stroke="#202020" stroke-width="0.18" letter-spacing="0.55">0</text>
<rect x="1021.3" y="336.7" width="41.9" height="11.9" fill="none" stroke="#555" stroke-width="0.9"/><path d="M1033.7 336.7 V348.6" stroke="#555" stroke-width="0.9"/>
<circle cx="1027.5" cy="342.65" r="2.1" fill="none" stroke="#333" stroke-width="0.7"/><path d="M1023.9 342.65 H1031.1 M1027.5 339.04999999999995 V346.25" stroke="#333" stroke-width="0.7"/>
<circle cx="1044.0" cy="342.65" r="3.1" fill="none" stroke="#333" stroke-width="0.8"/><path d="M1039.7 346.9 L1048.3 338.3" stroke="#333" stroke-width="0.8"/>
<text x="1053.9" y="346.70000000000005" font-size="11.2" text-anchor="start" fill="#202020" stroke="#202020" stroke-width="0.18" >0</text>
<text x="1021" y="364.2" font-size="11.2" text-anchor="start" fill="#202020" stroke="#202020" stroke-width="0.18" >1x</text>
<circle cx="1041.3" cy="360.3" r="3.1" fill="none" stroke="#333" stroke-width="0.8"/><path d="M1037.0 364.6 L1045.6 356.0" stroke="#333" stroke-width="0.8"/>
<text x="1046.2" y="364.2" font-size="11.2" text-anchor="start" fill="#202020" stroke="#202020" stroke-width="0.18" >80</text>
<text x="1062" y="358.2" font-size="6.1" text-anchor="start" fill="#202020" stroke="#202020" stroke-width="0.18" letter-spacing="0.55">0.035</text>
<text x="1062" y="364.09999999999997" font-size="6.1" text-anchor="start" fill="#202020" stroke="#202020" stroke-width="0.18" letter-spacing="0.55">0</text>
<rect x="1018.3" y="366.3" width="41.6" height="12.2" fill="none" stroke="#555" stroke-width="0.9"/><path d="M1030.5 366.3 V378.5" stroke="#555" stroke-width="0.9"/>
<circle cx="1024.4" cy="372.4" r="2.1" fill="none" stroke="#333" stroke-width="0.7"/><path d="M1020.8000000000001 372.4 H1028.0 M1024.4 368.79999999999995 V376.0" stroke="#333" stroke-width="0.7"/>
<circle cx="1041.3" cy="372.4" r="3.1" fill="none" stroke="#333" stroke-width="0.8"/><path d="M1037.0 376.7 L1045.6 368.1" stroke="#333" stroke-width="0.8"/>
<text x="1050.6" y="376.6" font-size="11.2" text-anchor="start" fill="#202020" stroke="#202020" stroke-width="0.18" >0</text>
<text x="1007" y="429.6" font-size="11.2" text-anchor="start" fill="#202020" stroke="#202020" stroke-width="0.18" >3x</text>
<rect x="1005.1" y="432.1" width="47.6" height="11.4" fill="none" stroke="#555" stroke-width="0.9"/><path d="M1016.7 432.1 V443.5" stroke="#555" stroke-width="0.9"/>
<path d="M1007.5000000000001 439.6 A3.4 3.4 0 0 1 1014.3000000000001 439.6 Z" fill="none" stroke="#444" stroke-width="0.7"/>
<text x="1025" y="441.6" font-size="11.2" text-anchor="start" fill="#202020" stroke="#202020" stroke-width="0.18" >0.05</text>
<text x="982.8" y="468.3" font-size="11.2" text-anchor="start" fill="#202020" stroke="#202020" stroke-width="0.18" >3x</text>
<rect x="981" y="470.8" width="47.7" height="11.8" fill="none" stroke="#555" stroke-width="0.9"/><path d="M993.3 470.8 V482.6" stroke="#555" stroke-width="0.9"/>
<path d="M983.75 478.50000000000006 A3.4 3.4 0 0 1 990.55 478.50000000000006 Z" fill="none" stroke="#444" stroke-width="0.7"/>
<text x="1001" y="480.70000000000005" font-size="11.2" text-anchor="start" fill="#202020" stroke="#202020" stroke-width="0.18" >0.03</text>
<text x="784" y="458.6" font-size="11.2" text-anchor="start" fill="#202020" stroke="#202020" stroke-width="0.18" >3x</text>
<rect x="782.4" y="460.6" width="47.5" height="12.9" fill="none" stroke="#555" stroke-width="0.9"/><path d="M794.8 460.6 V473.5" stroke="#555" stroke-width="0.9"/>
<path d="M785.1999999999999 468.85 A3.4 3.4 0 0 1 791.9999999999999 468.85 Z" fill="none" stroke="#444" stroke-width="0.7"/>
<text x="802.7" y="471.6" font-size="11.2" text-anchor="start" fill="#202020" stroke="#202020" stroke-width="0.18" >0.03</text>
</g>
<path d="M1294.9 523.4 V494.4" stroke="#10e010" stroke-width="1.3"/><path d="M1291.9 495.4 L1294.9 487.9 L1297.9 495.4 Z" fill="#10d010"/>
<path d="M1294.9 523.4 L1321.9 527.6" stroke="#f02020" stroke-width="1.3"/><path d="M1320.9 524.4 L1328.9 528.6 L1320.3000000000002 530.6 Z" fill="#e01010"/>
<path d="M1294.9 523.4 L1281.9 529.8" stroke="#2020f0" stroke-width="1.3"/><path d="M1281.4 527.4 L1276.4 529.0 L1275.9 532.8 L1280.9 533.0 L1283.5 530.0 Z" fill="#0808b0"/>
<g font-family="Liberation Sans, sans-serif" font-style="italic" font-size="10.4" fill="#222" stroke="#222" stroke-width="0.2"><text x="1300.3000000000002" y="489.79999999999995">Y</text><text x="1326.4" y="521.4">X</text><text x="1284.3000000000002" y="524.6">Z</text></g>
<path d="M406.6 567 H428.6 L433.1 571.5 V583.2 L427.4 577.6 V571.3 H406.6 Z" fill="#f0a062"/>
<path d="M406.6 575 H411.4 V583.3 H424 L428.6 588 H406.6 Z" fill="#48b8e0"/>
<rect x="435.6" y="567" width="4.4" height="4.3" fill="#48b8e0"/>
<path d="M442.2 567 H456.3 V571.3 H448 V588 H442.2 Z" fill="#48b8e0"/>
<path d="M451.3 588 L463.7 567 H471.2 L480.4 588 H473.8 L467.4 572 L457.8 588 Z" fill="#48b8e0"/>
<path d="M461.6 588 L465.8 579.4 L470.2 588 Z" fill="#f0a062"/>
<path d="M482.8 567 H502 V571.3 H488.5 V574.7 H508.9 V588 H482.8 V583.3 H503.5 V579 H482.8 Z" fill="#48b8e0"/>
<rect x="503.2" y="567" width="5.2" height="4.6" fill="#f0a062"/></svg>
</div>
<div id="console"><span>&gt;&gt;  Welcome  to  DTAS3D  V10.0.0!</span></div>
<span class="tl" style="left:60.5px;top:95.28px;letter-spacing:0.25px">Product</span><span class="tn" style="top:94.05px">1</span><span class="tl" style="left:83.5px;top:119.28px;letter-spacing:0.3px">Motor_Power</span><span class="tn" style="top:118.13px">16</span><span class="tl" style="left:106.2px;top:143.28px;letter-spacing:0.46px">qiangai</span><span class="tl" style="left:106.2px;top:167.28px;letter-spacing:0.43px">hougai</span><span class="tl" style="left:106.2px;top:191.28px;letter-spacing:0.2px">NAUO6</span><span class="tl" style="left:106.2px;top:215.28px;letter-spacing:0.2px">NAUO7</span><span class="tl" style="left:106.2px;top:240.28px;letter-spacing:0.2px">NAUO8</span><span class="tl" style="left:106.2px;top:264.28px;letter-spacing:0.2px">NAUO9</span><span class="tl" style="left:106.2px;top:288.28px;letter-spacing:0.13px">NAUO10</span><span class="tl" style="left:106.2px;top:312.28px;letter-spacing:0.13px">NAUO11</span><span class="tl" style="left:106.2px;top:336.28px;letter-spacing:0.13px">NAUO12</span><span class="tl" style="left:106.2px;top:360.28px;letter-spacing:0.13px">NAUO13</span><span class="tl" style="left:106.2px;top:384.28px;letter-spacing:0.13px">NAUO14</span><span class="tl" style="left:106.2px;top:408.28px;letter-spacing:0.13px">NAUO15</span><span class="tl" style="left:106.2px;top:432.28px;letter-spacing:0.13px">NAUO16</span><span class="tl" style="left:106.5px;top:456.28px;letter-spacing:-0.34px">Base</span><span class="tn" style="top:455.25px">2</span><span class="tl" style="left:106.5px;top:480.28px;letter-spacing:0.25px">dingzi</span><span class="tn" style="top:479.33px">3</span><span class="tl" style="left:106.5px;top:504.28px;letter-spacing:0.0px">zhuanzi</span><span class="tn" style="top:503.41px">3</span><span class="tn" style="top:527.49px">4/4</span><span class="tn" style="top:551.57px">1/1</span>
<svg width="1464" height="725" viewBox="0 0 1464 725">
<defs>
<g id="i-asm">
<path d="M0.4 0 H15.4 V11.6 H8.4 V6.6 H0.4 Z" fill="#ffc97c"/>
<path d="M0.4 0.5 H14.9 V11.6" fill="none" stroke="#f0a445" stroke-width="1.1"/>
<path d="M0.3 6.8 H7 V13 H15.4 V18 H0.3 Z" fill="#a3c6ff"/>
<path d="M0.3 7.3 H6.5 V13.5 H14.9 V18" fill="none" stroke="#5b7fe6" stroke-width="1.1"/>
</g>
<g id="i-part">
<path d="M0.4 0.4 H8.6 V11 H18.3 V18.2 H0.4 Z" fill="#00b4f8" stroke="#16709e" stroke-width="0.8"/>
</g>
<g id="i-assy"><g transform="scale(0.66)">
<rect x="6" y="7" width="4.6" height="8" fill="#f9a898"/><rect x="9.2" y="7" width="1.4" height="8" fill="#ee8878"/>
<rect x="15.2" y="7" width="4.6" height="8" fill="#f9a898"/><rect x="18.4" y="7" width="1.4" height="8" fill="#ee8878"/>
<path d="M0.4 2.8 L3 0.3 H27.5 L25 2.8 Z" fill="#b9c92c"/><path d="M25 2.8 L27.5 0.3 V5 L25 7.4 Z" fill="#a3b322"/>
<rect x="0.4" y="2.8" width="24.6" height="4.6" fill="#d4e444"/>
<path d="M0.4 15.6 L3 13.2 H27.5 L25 15.6 Z" fill="#b9c92c"/><path d="M25 15.6 L27.5 13.2 V24.6 L25 27.2 Z" fill="#a3b322"/>
<rect x="0.4" y="15.6" width="24.6" height="11.6" fill="#d4e444"/>
<rect x="3" y="17.4" width="20" height="7.2" fill="#fff"/>
<rect x="3" y="17.4" width="2.2" height="7.2" fill="#d4e444"/><rect x="11.6" y="17.4" width="3" height="7.2" fill="#e3ee7a"/><rect x="21" y="17.4" width="2" height="7.2" fill="#e3ee7a"/>
<path d="M5.6 17.4 V25 M14.6 17.4 V25" stroke="#b0b0b0" stroke-width="1.4"/>
<path d="M0.4 25.4 H25" stroke="#c9d938" stroke-width="2.6"/></g></g>
<g id="i-meas"><g transform="scale(0.66)">
<rect x="10" y="1.6" width="15.6" height="17.4" rx="1.2" fill="#ffc9ba" stroke="#d4d4d4" stroke-width="0.9"/>
<path d="M23.6 3.4 L26.4 1.6 V17 L23.6 19 Z" fill="#ff7040"/>
<path d="M0.3 0.3 H6.6 V21.2 H27.6 V27.2 H0.3 Z" fill="#d2e23e" stroke="#b6c62a" stroke-width="0.6"/>
<path d="M4.6 3 H6.4 M4.6 7 H6.4 M4.6 11 H6.4 M4.6 15 H6.4 M4.6 19 H6.4 M10 21.4 V23.2 M14 21.4 V23.2 M18 21.4 V23.2 M22 21.4 V23.2" stroke="#a4b41e" stroke-width="0.7"/></g></g>

</defs>
<g id="menu-cjk" font-family="'Liberation Sans','Noto Sans CJK SC',sans-serif" font-size="13.6" fill="#000"><text x="3.3" y="18.6">文件</text><text x="65.4" y="18.6">视图</text><text x="130.6" y="18.6">公差</text><text x="195.6" y="18.6">工具</text><text x="259" y="18.6">设置</text><text x="322.4" y="18.6">窗口</text><text x="390.8" y="18.6">帮助</text></g>
<g id="dock-cjk">
<text x="11.8" y="55.6" font-family="'Liberation Sans','Noto Sans CJK SC',sans-serif" font-size="13.2" fill="#000">装配链</text>
<text x="13.4" y="82.6" font-family="'Liberation Sans','Noto Sans CJK SC',sans-serif" font-size="13.6" fill="#000">名称</text>
<text x="278.6" y="82.6" font-family="'Liberation Sans','Noto Sans CJK SC',sans-serif" font-size="13.4" fill="#000">图标</text>
<text x="335.8" y="82.6" font-family="'Liberation Sans','Noto Sans CJK SC',sans-serif" font-size="13.5" fill="#000">数量</text>
<text x="11.8" y="695.6" font-family="'Liberation Sans','Noto Sans CJK SC',sans-serif" font-size="13.2" fill="#000">尺寸链</text>
<rect x="272.5" y="62" width="1" height="30" fill="#e5e5e5"/>
<rect x="330" y="62" width="1" height="30" fill="#e5e5e5"/>
<rect x="398.5" y="62" width="1" height="30" fill="#e5e5e5"/>
</g>
<g id="tree-icons"><rect x="12" y="95.55" width="17" height="17" rx="3.5" fill="#d9d9d9"/><rect x="15.3" y="102.40" width="10.4" height="3.3" rx="1.5" fill="#118797"/><g transform="translate(36,94.55)"><use href="#i-asm"/></g><rect x="35" y="119.63" width="17" height="17" rx="3.5" fill="#d9d9d9"/><rect x="38.3" y="126.48" width="10.4" height="3.3" rx="1.5" fill="#118797"/><g transform="translate(59,118.63)"><use href="#i-asm"/></g><rect x="58" y="143.71" width="17" height="17" rx="3.5" fill="#d9d9d9"/><rect x="61.3" y="150.56" width="10.4" height="3.3" rx="1.5" fill="#118797"/><rect x="64.85" y="147.01" width="3.3" height="10.4" rx="1.5" fill="#118797"/><g transform="translate(80.7,142.31)"><use href="#i-part"/></g><rect x="58" y="167.79" width="17" height="17" rx="3.5" fill="#d9d9d9"/><rect x="61.3" y="174.64" width="10.4" height="3.3" rx="1.5" fill="#118797"/><rect x="64.85" y="171.09" width="3.3" height="10.4" rx="1.5" fill="#118797"/><g transform="translate(80.7,166.39)"><use href="#i-part"/></g><rect x="58" y="191.87" width="17" height="17" rx="3.5" fill="#d9d9d9"/><rect x="61.3" y="198.72" width="10.4" height="3.3" rx="1.5" fill="#118797"/><rect x="64.85" y="195.17" width="3.3" height="10.4" rx="1.5" fill="#118797"/><g transform="translate(80.7,190.47)"><use href="#i-part"/></g><rect x="58" y="215.95" width="17" height="17" rx="3.5" fill="#d9d9d9"/><rect x="61.3" y="222.80" width="10.4" height="3.3" rx="1.5" fill="#118797"/><rect x="64.85" y="219.25" width="3.3" height="10.4" rx="1.5" fill="#118797"/><g transform="translate(80.7,214.55)"><use href="#i-part"/></g><rect x="58" y="240.03" width="17" height="17" rx="3.5" fill="#d9d9d9"/><rect x="61.3" y="246.88" width="10.4" height="3.3" rx="1.5" fill="#118797"/><rect x="64.85" y="243.33" width="3.3" height="10.4" rx="1.5" fill="#118797"/><g transform="translate(80.7,238.63)"><use href="#i-part"/></g><rect x="58" y="264.11" width="17" height="17" rx="3.5" fill="#d9d9d9"/><rect x="61.3" y="270.96" width="10.4" height="3.3" rx="1.5" fill="#118797"/><rect x="64.85" y="267.41" width="3.3" height="10.4" rx="1.5" fill="#118797"/><g transform="translate(80.7,262.71)"><use href="#i-part"/></g><rect x="58" y="288.19" width="17" height="17" rx="3.5" fill="#d9d9d9"/><rect x="61.3" y="295.04" width="10.4" height="3.3" rx="1.5" fill="#118797"/><rect x="64.85" y="291.49" width="3.3" height="10.4" rx="1.5" fill="#118797"/><g transform="translate(80.7,286.79)"><use href="#i-part"/></g><rect x="58" y="312.27" width="17" height="17" rx="3.5" fill="#d9d9d9"/><rect x="61.3" y="319.12" width="10.4" height="3.3" rx="1.5" fill="#118797"/><rect x="64.85" y="315.57" width="3.3" height="10.4" rx="1.5" fill="#118797"/><g transform="translate(80.7,310.87)"><use href="#i-part"/></g><rect x="58" y="336.35" width="17" height="17" rx="3.5" fill="#d9d9d9"/><rect x="61.3" y="343.20" width="10.4" height="3.3" rx="1.5" fill="#118797"/><rect x="64.85" y="339.65" width="3.3" height="10.4" rx="1.5" fill="#118797"/><g transform="translate(80.7,334.95)"><use href="#i-part"/></g><rect x="58" y="360.43" width="17" height="17" rx="3.5" fill="#d9d9d9"/><rect x="61.3" y="367.28" width="10.4" height="3.3" rx="1.5" fill="#118797"/><rect x="64.85" y="363.73" width="3.3" height="10.4" rx="1.5" fill="#118797"/><g transform="translate(80.7,359.03)"><use href="#i-part"/></g><rect x="58" y="384.51" width="17" height="17" rx="3.5" fill="#d9d9d9"/><rect x="61.3" y="391.36" width="10.4" height="3.3" rx="1.5" fill="#118797"/><rect x="64.85" y="387.81" width="3.3" height="10.4" rx="1.5" fill="#118797"/><g transform="translate(80.7,383.11)"><use href="#i-part"/></g><rect x="58" y="408.59" width="17" height="17" rx="3.5" fill="#d9d9d9"/><rect x="61.3" y="415.44" width="10.4" height="3.3" rx="1.5" fill="#118797"/><rect x="64.85" y="411.89" width="3.3" height="10.4" rx="1.5" fill="#118797"/><g transform="translate(80.7,407.19)"><use href="#i-part"/></g><rect x="58" y="432.67" width="17" height="17" rx="3.5" fill="#d9d9d9"/><rect x="61.3" y="439.52" width="10.4" height="3.3" rx="1.5" fill="#118797"/><rect x="64.85" y="435.97" width="3.3" height="10.4" rx="1.5" fill="#118797"/><g transform="translate(80.7,431.27)"><use href="#i-part"/></g><rect x="58" y="456.75" width="17" height="17" rx="3.5" fill="#d9d9d9"/><rect x="61.3" y="463.60" width="10.4" height="3.3" rx="1.5" fill="#118797"/><rect x="64.85" y="460.05" width="3.3" height="10.4" rx="1.5" fill="#118797"/><g transform="translate(82,455.75)"><use href="#i-asm"/></g><rect x="58" y="480.83" width="17" height="17" rx="3.5" fill="#d9d9d9"/><rect x="61.3" y="487.68" width="10.4" height="3.3" rx="1.5" fill="#118797"/><rect x="64.85" y="484.13" width="3.3" height="10.4" rx="1.5" fill="#118797"/><g transform="translate(82,479.83)"><use href="#i-asm"/></g><rect x="58" y="504.91" width="17" height="17" rx="3.5" fill="#d9d9d9"/><rect x="61.3" y="511.76" width="10.4" height="3.3" rx="1.5" fill="#118797"/><rect x="64.85" y="508.21" width="3.3" height="10.4" rx="1.5" fill="#118797"/><g transform="translate(82,503.91)"><use href="#i-asm"/></g><rect x="58" y="528.99" width="17" height="17" rx="3.5" fill="#d9d9d9"/><rect x="61.3" y="535.84" width="10.4" height="3.3" rx="1.5" fill="#118797"/><rect x="64.85" y="532.29" width="3.3" height="10.4" rx="1.5" fill="#118797"/><g transform="translate(80.7,528.19)"><use href="#i-assy"/></g><text x="106.2" y="542.7" font-family="'Liberation Sans','Noto Sans CJK SC',sans-serif" font-size="13.9" fill="#000">装配</text><rect x="58" y="553.07" width="17" height="17" rx="3.5" fill="#d9d9d9"/><rect x="61.3" y="559.92" width="10.4" height="3.3" rx="1.5" fill="#118797"/><rect x="64.85" y="556.37" width="3.3" height="10.4" rx="1.5" fill="#118797"/><g transform="translate(80.7,552.17)"><use href="#i-meas"/></g><text x="106.2" y="566.7" font-family="'Liberation Sans','Noto Sans CJK SC',sans-serif" font-size="13.9" fill="#000">测量</text></g>
<rect x="404" y="38" width="1049" height="4.4" fill="#fff"/>
<rect x="404" y="78.5" width="1048" height="1.6" fill="#cdcdcd"/>
<rect x="404" y="118.2" width="1048" height="1.6" fill="#cdcdcd"/>
<rect x="404" y="157" width="1048" height="1.6" fill="#cdcdcd"/>
<rect x="409.00" y="46.00" width="1.6" height="1.6" fill="#fff"/><rect x="409.80" y="46.80" width="1.5" height="1.5" fill="#a0a0a0"/>
<rect x="409.00" y="50.62" width="1.6" height="1.6" fill="#fff"/><rect x="409.80" y="51.42" width="1.5" height="1.5" fill="#a0a0a0"/>
<rect x="409.00" y="55.24" width="1.6" height="1.6" fill="#fff"/><rect x="409.80" y="56.04" width="1.5" height="1.5" fill="#a0a0a0"/>
<rect x="409.00" y="59.86" width="1.6" height="1.6" fill="#fff"/><rect x="409.80" y="60.66" width="1.5" height="1.5" fill="#a0a0a0"/>
<rect x="409.00" y="64.48" width="1.6" height="1.6" fill="#fff"/><rect x="409.80" y="65.28" width="1.5" height="1.5" fill="#a0a0a0"/>
<rect x="409.00" y="69.10" width="1.6" height="1.6" fill="#fff"/><rect x="409.80" y="69.90" width="1.5" height="1.5" fill="#a0a0a0"/>
<rect x="409.00" y="73.72" width="1.6" height="1.6" fill="#fff"/><rect x="409.80" y="74.52" width="1.5" height="1.5" fill="#a0a0a0"/>
<rect x="529.60" y="46.00" width="1.6" height="1.6" fill="#fff"/><rect x="530.40" y="46.80" width="1.5" height="1.5" fill="#a0a0a0"/>
<rect x="529.60" y="50.62" width="1.6" height="1.6" fill="#fff"/><rect x="530.40" y="51.42" width="1.5" height="1.5" fill="#a0a0a0"/>
<rect x="529.60" y="55.24" width="1.6" height="1.6" fill="#fff"/><rect x="530.40" y="56.04" width="1.5" height="1.5" fill="#a0a0a0"/>
<rect x="529.60" y="59.86" width="1.6" height="1.6" fill="#fff"/><rect x="530.40" y="60.66" width="1.5" height="1.5" fill="#a0a0a0"/>
<rect x="529.60" y="64.48" width="1.6" height="1.6" fill="#fff"/><rect x="530.40" y="65.28" width="1.5" height="1.5" fill="#a0a0a0"/>
<rect x="529.60" y="69.10" width="1.6" height="1.6" fill="#fff"/><rect x="530.40" y="69.90" width="1.5" height="1.5" fill="#a0a0a0"/>
<rect x="529.60" y="73.72" width="1.6" height="1.6" fill="#fff"/><rect x="530.40" y="74.52" width="1.5" height="1.5" fill="#a0a0a0"/>
<rect x="863.60" y="46.00" width="1.6" height="1.6" fill="#fff"/><rect x="864.40" y="46.80" width="1.5" height="1.5" fill="#a0a0a0"/>
<rect x="863.60" y="50.62" width="1.6" height="1.6" fill="#fff"/><rect x="864.40" y="51.42" width="1.5" height="1.5" fill="#a0a0a0"/>
<rect x="863.60" y="55.24" width="1.6" height="1.6" fill="#fff"/><rect x="864.40" y="56.04" width="1.5" height="1.5" fill="#a0a0a0"/>
<rect x="863.60" y="59.86" width="1.6" height="1.6" fill="#fff"/><rect x="864.40" y="60.66" width="1.5" height="1.5" fill="#a0a0a0"/>
<rect x="863.60" y="64.48" width="1.6" height="1.6" fill="#fff"/><rect x="864.40" y="65.28" width="1.5" height="1.5" fill="#a0a0a0"/>
<rect x="863.60" y="69.10" width="1.6" height="1.6" fill="#fff"/><rect x="864.40" y="69.90" width="1.5" height="1.5" fill="#a0a0a0"/>
<rect x="863.60" y="73.72" width="1.6" height="1.6" fill="#fff"/><rect x="864.40" y="74.52" width="1.5" height="1.5" fill="#a0a0a0"/>
<rect x="1265.50" y="46.00" width="1.6" height="1.6" fill="#fff"/><rect x="1266.30" y="46.80" width="1.5" height="1.5" fill="#a0a0a0"/>
<rect x="1265.50" y="50.62" width="1.6" height="1.6" fill="#fff"/><rect x="1266.30" y="51.42" width="1.5" height="1.5" fill="#a0a0a0"/>
<rect x="1265.50" y="55.24" width="1.6" height="1.6" fill="#fff"/><rect x="1266.30" y="56.04" width="1.5" height="1.5" fill="#a0a0a0"/>
<rect x="1265.50" y="59.86" width="1.6" height="1.6" fill="#fff"/><rect x="1266.30" y="60.66" width="1.5" height="1.5" fill="#a0a0a0"/>
<rect x="1265.50" y="64.48" width="1.6" height="1.6" fill="#fff"/><rect x="1266.30" y="65.28" width="1.5" height="1.5" fill="#a0a0a0"/>
<rect x="1265.50" y="69.10" width="1.6" height="1.6" fill="#fff"/><rect x="1266.30" y="69.90" width="1.5" height="1.5" fill="#a0a0a0"/>
<rect x="1265.50" y="73.72" width="1.6" height="1.6" fill="#fff"/><rect x="1266.30" y="74.52" width="1.5" height="1.5" fill="#a0a0a0"/>
<rect x="1328.50" y="46.00" width="1.6" height="1.6" fill="#fff"/><rect x="1329.30" y="46.80" width="1.5" height="1.5" fill="#a0a0a0"/>
<rect x="1328.50" y="50.62" width="1.6" height="1.6" fill="#fff"/><rect x="1329.30" y="51.42" width="1.5" height="1.5" fill="#a0a0a0"/>
<rect x="1328.50" y="55.24" width="1.6" height="1.6" fill="#fff"/><rect x="1329.30" y="56.04" width="1.5" height="1.5" fill="#a0a0a0"/>
<rect x="1328.50" y="59.86" width="1.6" height="1.6" fill="#fff"/><rect x="1329.30" y="60.66" width="1.5" height="1.5" fill="#a0a0a0"/>
<rect x="1328.50" y="64.48" width="1.6" height="1.6" fill="#fff"/><rect x="1329.30" y="65.28" width="1.5" height="1.5" fill="#a0a0a0"/>
<rect x="1328.50" y="69.10" width="1.6" height="1.6" fill="#fff"/><rect x="1329.30" y="69.90" width="1.5" height="1.5" fill="#a0a0a0"/>
<rect x="1328.50" y="73.72" width="1.6" height="1.6" fill="#fff"/><rect x="1329.30" y="74.52" width="1.5" height="1.5" fill="#a0a0a0"/>
<rect x="1429.60" y="46.00" width="1.6" height="1.6" fill="#fff"/><rect x="1430.40" y="46.80" width="1.5" height="1.5" fill="#a0a0a0"/>
<rect x="1429.60" y="50.62" width="1.6" height="1.6" fill="#fff"/><rect x="1430.40" y="51.42" width="1.5" height="1.5" fill="#a0a0a0"/>
<rect x="1429.60" y="55.24" width="1.6" height="1.6" fill="#fff"/><rect x="1430.40" y="56.04" width="1.5" height="1.5" fill="#a0a0a0"/>
<rect x="1429.60" y="59.86" width="1.6" height="1.6" fill="#fff"/><rect x="1430.40" y="60.66" width="1.5" height="1.5" fill="#a0a0a0"/>
<rect x="1429.60" y="64.48" width="1.6" height="1.6" fill="#fff"/><rect x="1430.40" y="65.28" width="1.5" height="1.5" fill="#a0a0a0"/>
<rect x="1429.60" y="69.10" width="1.6" height="1.6" fill="#fff"/><rect x="1430.40" y="69.90" width="1.5" height="1.5" fill="#a0a0a0"/>
<rect x="1429.60" y="73.72" width="1.6" height="1.6" fill="#fff"/><rect x="1430.40" y="74.52" width="1.5" height="1.5" fill="#a0a0a0"/>
<rect x="523.9" y="42" width="1.2" height="37" fill="#a4a4a4"/>
<rect x="857.9" y="42" width="1.2" height="37" fill="#a4a4a4"/>
<rect x="1259.8000000000002" y="42" width="1.2" height="37" fill="#a4a4a4"/>
<rect x="1323.1000000000001" y="42" width="1.2" height="37" fill="#a4a4a4"/>
<rect x="1424.2" y="42" width="1.2" height="37" fill="#a4a4a4"/>
<rect x="408.80" y="85.00" width="1.6" height="1.6" fill="#fff"/><rect x="409.60" y="85.80" width="1.5" height="1.5" fill="#a0a0a0"/>
<rect x="408.80" y="89.62" width="1.6" height="1.6" fill="#fff"/><rect x="409.60" y="90.42" width="1.5" height="1.5" fill="#a0a0a0"/>
<rect x="408.80" y="94.24" width="1.6" height="1.6" fill="#fff"/><rect x="409.60" y="95.04" width="1.5" height="1.5" fill="#a0a0a0"/>
<rect x="408.80" y="98.86" width="1.6" height="1.6" fill="#fff"/><rect x="409.60" y="99.66" width="1.5" height="1.5" fill="#a0a0a0"/>
<rect x="408.80" y="103.48" width="1.6" height="1.6" fill="#fff"/><rect x="409.60" y="104.28" width="1.5" height="1.5" fill="#a0a0a0"/>
<rect x="408.80" y="108.10" width="1.6" height="1.6" fill="#fff"/><rect x="409.60" y="108.90" width="1.5" height="1.5" fill="#a0a0a0"/>
<rect x="408.80" y="112.72" width="1.6" height="1.6" fill="#fff"/><rect x="409.60" y="113.52" width="1.5" height="1.5" fill="#a0a0a0"/>
<rect x="885.20" y="85.00" width="1.6" height="1.6" fill="#fff"/><rect x="886.00" y="85.80" width="1.5" height="1.5" fill="#a0a0a0"/>
<rect x="885.20" y="89.62" width="1.6" height="1.6" fill="#fff"/><rect x="886.00" y="90.42" width="1.5" height="1.5" fill="#a0a0a0"/>
<rect x="885.20" y="94.24" width="1.6" height="1.6" fill="#fff"/><rect x="886.00" y="95.04" width="1.5" height="1.5" fill="#a0a0a0"/>
<rect x="885.20" y="98.86" width="1.6" height="1.6" fill="#fff"/><rect x="886.00" y="99.66" width="1.5" height="1.5" fill="#a0a0a0"/>
<rect x="885.20" y="103.48" width="1.6" height="1.6" fill="#fff"/><rect x="886.00" y="104.28" width="1.5" height="1.5" fill="#a0a0a0"/>
<rect x="885.20" y="108.10" width="1.6" height="1.6" fill="#fff"/><rect x="886.00" y="108.90" width="1.5" height="1.5" fill="#a0a0a0"/>
<rect x="885.20" y="112.72" width="1.6" height="1.6" fill="#fff"/><rect x="886.00" y="113.52" width="1.5" height="1.5" fill="#a0a0a0"/>
<rect x="1041.40" y="85.00" width="1.6" height="1.6" fill="#fff"/><rect x="1042.20" y="85.80" width="1.5" height="1.5" fill="#a0a0a0"/>
<rect x="1041.40" y="89.62" width="1.6" height="1.6" fill="#fff"/><rect x="1042.20" y="90.42" width="1.5" height="1.5" fill="#a0a0a0"/>
<rect x="1041.40" y="94.24" width="1.6" height="1.6" fill="#fff"/><rect x="1042.20" y="95.04" width="1.5" height="1.5" fill="#a0a0a0"/>
<rect x="1041.40" y="98.86" width="1.6" height="1.6" fill="#fff"/><rect x="1042.20" y="99.66" width="1.5" height="1.5" fill="#a0a0a0"/>
<rect x="1041.40" y="103.48" width="1.6" height="1.6" fill="#fff"/><rect x="1042.20" y="104.28" width="1.5" height="1.5" fill="#a0a0a0"/>
<rect x="1041.40" y="108.10" width="1.6" height="1.6" fill="#fff"/><rect x="1042.20" y="108.90" width="1.5" height="1.5" fill="#a0a0a0"/>
<rect x="1041.40" y="112.72" width="1.6" height="1.6" fill="#fff"/><rect x="1042.20" y="113.52" width="1.5" height="1.5" fill="#a0a0a0"/>
<rect x="879.8" y="80.5" width="1.2" height="38.0" fill="#a4a4a4"/>
<rect x="1035.7" y="80.5" width="1.2" height="38.0" fill="#a4a4a4"/>
<rect x="408.80" y="123.80" width="1.6" height="1.6" fill="#fff"/><rect x="409.60" y="124.60" width="1.5" height="1.5" fill="#a0a0a0"/>
<rect x="408.80" y="128.42" width="1.6" height="1.6" fill="#fff"/><rect x="409.60" y="129.22" width="1.5" height="1.5" fill="#a0a0a0"/>
<rect x="408.80" y="133.04" width="1.6" height="1.6" fill="#fff"/><rect x="409.60" y="133.84" width="1.5" height="1.5" fill="#a0a0a0"/>
<rect x="408.80" y="137.66" width="1.6" height="1.6" fill="#fff"/><rect x="409.60" y="138.46" width="1.5" height="1.5" fill="#a0a0a0"/>
<rect x="408.80" y="142.28" width="1.6" height="1.6" fill="#fff"/><rect x="409.60" y="143.08" width="1.5" height="1.5" fill="#a0a0a0"/>
<rect x="408.80" y="146.90" width="1.6" height="1.6" fill="#fff"/><rect x="409.60" y="147.70" width="1.5" height="1.5" fill="#a0a0a0"/>
<rect x="408.80" y="151.52" width="1.6" height="1.6" fill="#fff"/><rect x="409.60" y="152.32" width="1.5" height="1.5" fill="#a0a0a0"/>
<rect x="600.40" y="123.80" width="1.6" height="1.6" fill="#fff"/><rect x="601.20" y="124.60" width="1.5" height="1.5" fill="#a0a0a0"/>
<rect x="600.40" y="128.42" width="1.6" height="1.6" fill="#fff"/><rect x="601.20" y="129.22" width="1.5" height="1.5" fill="#a0a0a0"/>
<rect x="600.40" y="133.04" width="1.6" height="1.6" fill="#fff"/><rect x="601.20" y="133.84" width="1.5" height="1.5" fill="#a0a0a0"/>
<rect x="600.40" y="137.66" width="1.6" height="1.6" fill="#fff"/><rect x="601.20" y="138.46" width="1.5" height="1.5" fill="#a0a0a0"/>
<rect x="600.40" y="142.28" width="1.6" height="1.6" fill="#fff"/><rect x="601.20" y="143.08" width="1.5" height="1.5" fill="#a0a0a0"/>
<rect x="600.40" y="146.90" width="1.6" height="1.6" fill="#fff"/><rect x="601.20" y="147.70" width="1.5" height="1.5" fill="#a0a0a0"/>
<rect x="600.40" y="151.52" width="1.6" height="1.6" fill="#fff"/><rect x="601.20" y="152.32" width="1.5" height="1.5" fill="#a0a0a0"/>
<rect x="595.0" y="120" width="1.2" height="37" fill="#a4a4a4"/>
<path d="M1248.3 58.4 l3.6 3.2 l-3.6 3.2" fill="none" stroke="#000" stroke-width="1.9" stroke-linejoin="miter"/>
<path d="M1252.9 58.4 l3.6 3.2 l-3.6 3.2" fill="none" stroke="#000" stroke-width="1.9" stroke-linejoin="miter"/>
<path d="M1311.5 58.4 l3.6 3.2 l-3.6 3.2" fill="none" stroke="#000" stroke-width="1.9" stroke-linejoin="miter"/>
<path d="M1316.1 58.4 l3.6 3.2 l-3.6 3.2" fill="none" stroke="#000" stroke-width="1.9" stroke-linejoin="miter"/>
<path d="M1412.0 58.4 l3.6 3.2 l-3.6 3.2" fill="none" stroke="#000" stroke-width="1.9" stroke-linejoin="miter"/>
<path d="M1416.6 58.4 l3.6 3.2 l-3.6 3.2" fill="none" stroke="#000" stroke-width="1.9" stroke-linejoin="miter"/>
<path d="M1440.0 58.4 l3.6 3.2 l-3.6 3.2" fill="none" stroke="#000" stroke-width="1.9" stroke-linejoin="miter"/>
<path d="M1444.6 58.4 l3.6 3.2 l-3.6 3.2" fill="none" stroke="#000" stroke-width="1.9" stroke-linejoin="miter"/>
<path d="M1440.0 97.2 l3.6 3.2 l-3.6 3.2" fill="none" stroke="#000" stroke-width="1.9" stroke-linejoin="miter"/>
<path d="M1444.6 97.2 l3.6 3.2 l-3.6 3.2" fill="none" stroke="#000" stroke-width="1.9" stroke-linejoin="miter"/>
<g transform="translate(421.7,48.1)"><path d="M0 9.6 L10 0.2 V5 C19 4.6 24 10 23.8 15.5 C23.5 20.5 19.5 24.5 14.8 25.9 C17.8 22.5 18.2 19 16.6 16.8 C15 14.6 12.5 14.2 10 14.3 V19.2 Z" fill="#a0a0a0"/></g>
<g transform="translate(480.5,48.1) scale(-1,1)"><path d="M0 9.6 L10 0.2 V5 C19 4.6 24 10 23.8 15.5 C23.5 20.5 19.5 24.5 14.8 25.9 C17.8 22.5 18.2 19 16.6 16.8 C15 14.6 12.5 14.2 10 14.3 V19.2 Z" fill="#a0a0a0"/></g>
<g transform="translate(539.8,47.1)">
<rect x="6.7" y="0.3" width="21" height="21" fill="#a6dcf7" stroke="#4aa6d6" stroke-width="0.8"/>
<rect x="11" y="3" width="13" height="3.5" fill="#d8f0fc" stroke="#4aa6d6" stroke-width="0.5"/>
<rect x="3.8" y="5" width="21" height="22" rx="2" fill="#fff" stroke="#a8a8a8" stroke-width="0.9"/>
<rect x="6.4" y="8.6" width="13.6" height="5.8" fill="#7fd3fb" stroke="#2f9fd8" stroke-width="0.7"/>
<path d="M0.4 17.2 H13 V15 L20 19 L13 23.2 V20.8 H0.4 Z" fill="#12b0f2"/>
<circle cx="5.3" cy="3.6" r="1.7" fill="#004a94"/><circle cx="1.7" cy="15.8" r="1.7" fill="#004a94"/>
</g>
<g transform="translate(575.4,47.1)">
<rect x="2.2" y="4.8" width="3.2" height="7" fill="#1ea6e6"/>
<rect x="23" y="4.8" width="3.6" height="22.4" fill="#1ea6e6"/>
<rect x="5.4" y="0.4" width="16" height="12" fill="#fff" stroke="#c9e6f6" stroke-width="0.7"/>
<path d="M7.5 3 H19 M7.5 5.2 H19 M7.5 7.4 H19 M7.5 9.4 H19" stroke="#aadcf6" stroke-width="0.9"/>
<rect x="0.5" y="11" width="24" height="16" rx="2" fill="#fafafc" stroke="#c4c4c4" stroke-width="0.9"/>
<path d="M12.3 14.8 V23.2 M8.1 19 H16.5" stroke="#2fb0ea" stroke-width="1.1"/>
</g>
<g transform="translate(610.9,47.1)">
<path d="M13 1 H27.4 V27 H20 L17 13 H10 Z" fill="#86d8fe" stroke="#3fa6dc" stroke-width="0.7"/>
<rect x="19" y="1" width="8" height="3" fill="#3aaee8"/>
<path d="M0.6 13.4 H17.5 L23.5 27.2 H5 Z" fill="#fff" stroke="#b4b4b4" stroke-width="0.9"/>
<path d="M15.5 0.3 C8 0.5 3.5 6 3.5 11 H0.3 L6 17.3 L11.7 11 H8.6 C9 7 12 4.5 16 4.2 Z" fill="#1fb0f2"/>
<path d="M11 13.6 H17" stroke="#3fb6f0" stroke-width="1" stroke-dasharray="2 1"/>
</g>
<g transform="translate(650.2,47.1)"><path d="M0.4 0.4 H15.8 L21.400000000000002 6 V26.900000000000002 H0.4 Z" fill="#fff" stroke="#9fd0f0" stroke-width="0.9"/>
<circle cx="6.3" cy="6.4" r="3.1" fill="#f0603c"/><path d="M6.3 6.4 L9.6 4.8 A3.3 3.3 0 0 1 9.6 8 Z" fill="#2f9fe0"/>
<path d="M3.5 13 H9.5" stroke="#8fd0f4" stroke-width="1" stroke-dasharray="1.6 0.8"/>
<path d="M4 24 V21.5 H5.6 V20 H7.2 V21.5 H8.8 V19 H10.4 V21 H12 V18.5 H13.6 V20.5 H15.2 V17 H16.8 V24 Z" fill="#49c0f4"/>
</g>
<g transform="translate(685.5,47.1)"><path d="M0.4 0.4 H15.8 L21.400000000000002 6 V26.900000000000002 H0.4 Z" fill="#fff" stroke="#9fd0f0" stroke-width="0.9"/>
<circle cx="6.5" cy="7.5" r="3" fill="#f0603c"/><circle cx="15.2" cy="7.5" r="3" fill="#f0603c"/>
<circle cx="8.2" cy="7.5" r="1.3" fill="#2f9fe0"/><circle cx="13.5" cy="7.5" r="1.3" fill="#2f9fe0"/>
<path d="M2.5 13.6 H19" stroke="#9aa8e8" stroke-width="0.8"/>
<path d="M3 16.5 H6 M15.5 16.5 H18.5" stroke="#8fd0f4" stroke-width="1"/>
<path d="M2.5 25.5 V23 H4.5 V21.5 H6 V19.5 H7.5 V18 H9.2 V25.5 Z M12.5 25.5 V18 H14 V20 H15.5 V22 H17 V23.5 H19 V25.5 Z" fill="#49c0f4"/>
</g>
<g transform="translate(719.3,47.1)"><path d="M0.5 0.5 H17 L23.4 6.5 V27 H17 L15 24 H8.5 L6.5 27 H0.5 V17 L1.8 16 V11 L0.5 10 Z" fill="#fff" stroke="#b9def4" stroke-width="0.9"/>
<rect x="4.4" y="6.2" width="15.3" height="16" rx="1.2" fill="#e9eef8" stroke="#19b2f4" stroke-width="0.9"/>
<rect x="4.4" y="6.2" width="15.3" height="3.8" fill="#12b6f8"/><rect x="4.4" y="18.4" width="15.3" height="3.8" fill="#12b6f8"/>
<rect x="17.6" y="6.2" width="2.1" height="2.2" fill="#0a70c8"/><rect x="17.6" y="20" width="2.1" height="2.2" fill="#0a70c8"/></g>
<g transform="translate(754.9,47.1)"><path d="M0.5 0.5 H17 L23.4 6.5 V27 H17 L15 24 H8.5 L6.5 27 H0.5 V17 L1.8 16 V11 L0.5 10 Z" fill="#fff" stroke="#b9def4" stroke-width="0.9"/>
<rect x="4.4" y="6.2" width="15.3" height="16" rx="1.2" fill="#e9eef8" stroke="#19b2f4" stroke-width="0.9"/>
<rect x="4.4" y="6.2" width="15.3" height="3.8" fill="#12b6f8"/><rect x="4.4" y="18.4" width="15.3" height="3.8" fill="#12b6f8"/>
<rect x="17.6" y="6.2" width="2.1" height="2.2" fill="#0a70c8"/><rect x="17.6" y="20" width="2.1" height="2.2" fill="#0a70c8"/>
<path d="M11.4 26.8 L12.8 23 L21.5 14.2 L24.4 17 L15.5 25.8 Z" fill="#f2a21c"/>
<path d="M21.5 14.2 L23 12.8 C24 12 25.8 13.6 25 14.8 L24.4 17 Z" fill="#9a9a9a"/>
<path d="M11.4 26.8 L12.8 23 L15.5 25.8 Z" fill="#3a4a60"/>
</g>
<g transform="translate(789.3,47.1)">
<rect x="21.2" y="6" width="3" height="15" rx="1" fill="#fff" stroke="#a8a8a8" stroke-width="0.8"/>
<rect x="24" y="12.4" width="3.2" height="8.6" fill="#1ea6e6"/>
<rect x="17.6" y="6" width="3.8" height="21" fill="#1ea6e6"/>
<rect x="0.5" y="0.5" width="17.4" height="26.5" rx="1.8" fill="#fff" stroke="#9a9a9a" stroke-width="0.9"/>
<path d="M0.9 2.3 Q0.9 0.9 2.3 0.9 H16.1 Q17.5 0.9 17.5 2.3 V4.2 H0.9 Z" fill="#12b6f8"/>
<path d="M3.5 9.5 H15.5 M3.5 11.5 H15.5" stroke="#c6e6f8" stroke-width="1"/>
<path d="M3.5 14.5 H10 M3.5 17 H6 M3.5 20.5 H15" stroke="#bfe2f6" stroke-width="0.9" stroke-dasharray="2.2 0.8"/>
</g>
<g transform="translate(874.3,49.6)">
<path d="M0.5 3 L3.5 0.4 H26.8 L24 3 Z" fill="#2fc4dc"/>
<path d="M24 3 L26.8 0.4 V19.8 L24 22.4 Z" fill="#1fa6c4"/>
<rect x="0.5" y="3" width="23.5" height="19.4" fill="#a9e9f2" stroke="#25b6d2" stroke-width="1"/>
<rect x="3.2" y="4" width="5.6" height="16.5" fill="#fff"/><rect x="10.4" y="4" width="5.6" height="16.5" fill="#fff"/><rect x="17.6" y="4" width="5.2" height="16.5" fill="#fff"/>
<path d="M3.2 4 V20 M10.4 4 V20 M17.6 4 V20" stroke="#b0b0b0" stroke-width="1.1"/>
<path d="M8.8 4 V20 M16 4 V20" stroke="#d8d8d8" stroke-width="0.7"/>
<path d="M1 20.5 H24" stroke="#35c2da" stroke-width="1.6"/>
</g>
<g transform="translate(909.6,49.6)">
<path d="M0.5 3 L3.2 0.4 H27.3 L24.6 3 Z" fill="#2fc4dc"/>
<path d="M24.6 3 L27.3 0.4 V19.6 L24.6 22.4 Z" fill="#1fa6c4"/>
<rect x="0.5" y="3" width="24.1" height="19.4" fill="#b3ecf4" stroke="#25b6d2" stroke-width="0.9"/>
<rect x="3.4" y="6" width="18.4" height="13" rx="3.2" fill="#f0f0f0"/>
<path d="M6.6 6 H18.6 Q21.8 6 21.8 9.2" fill="none" stroke="#7fd6e4" stroke-width="0.8"/>
<path d="M4 7.5 V15 Q4 18.3 7.5 18.3 H20" fill="none" stroke="#0d6f94" stroke-width="1.7"/>
<path d="M9 18.6 H20.5 Q21.6 18 21.6 15" fill="none" stroke="#2fb6cf" stroke-width="0.9"/>
</g>
<g transform="translate(945.3,49.6)">
<rect x="6.6" y="7.4" width="5.6" height="14.6" rx="0.8" fill="#f9c862"/><rect x="10.6" y="7.4" width="1.6" height="14.6" fill="#eeb048"/>
<rect x="15.8" y="7.4" width="5.6" height="14.6" rx="0.8" fill="#f9c862"/><rect x="19.8" y="7.4" width="1.6" height="14.6" fill="#eeb048"/>
<path d="M0.4 3.2 L2.6 0.4 H27.2 L25 3.2 Z" fill="#27c0d8"/>
<path d="M25 3.2 L27.2 0.4 V4.6 L25 7.6 Z" fill="#1fa6c4"/>
<rect x="0.4" y="3.2" width="24.6" height="4.4" fill="#b3ecf4" stroke="#5fcfe0" stroke-width="0.6"/>
</g>
<g transform="translate(981,49.6)"><path d="M24.6 2.4 L27 0.4 V20.2 L24.6 22.4 Z" fill="#35bcd2"/><rect x="0.4" y="0.8" width="24.6" height="21.6" fill="#b3ecf4" stroke="#4cc6da" stroke-width="0.8"/><circle cx="10" cy="6.4" r="1.25" fill="#1fc0e0"/><circle cx="20.4" cy="6.4" r="1.25" fill="#1fc0e0"/><circle cx="5" cy="11.8" r="1.25" fill="#1fc0e0"/><circle cx="15.4" cy="11.8" r="1.25" fill="#1fc0e0"/><circle cx="10" cy="17.2" r="1.25" fill="#1fc0e0"/><circle cx="20.4" cy="17.2" r="1.25" fill="#1fc0e0"/></g>
<g transform="translate(1016.5,49.6)"><path d="M24.6 2.4 L27 0.4 V20.2 L24.6 22.4 Z" fill="#35bcd2"/><rect x="0.4" y="0.8" width="24.6" height="21.6" fill="#b3ecf4" stroke="#4cc6da" stroke-width="0.8"/>
<path d="M0.8 1 L25.8 22" stroke="#3a7f90" stroke-width="0.9"/>
<path d="M9 9 L14.5 3.8 M16 17.5 L21 10" stroke="#3a5a70" stroke-width="0.9"/>
<circle cx="14.6" cy="3.8" r="1.2" fill="#1fc0e0"/><circle cx="6" cy="12.3" r="1.2" fill="#1fc0e0"/><circle cx="21.4" cy="9.6" r="1.2" fill="#1fc0e0"/><circle cx="13.3" cy="18.5" r="1.2" fill="#1fc0e0"/>
</g>
<g transform="translate(1052,49.6)"><path d="M24.6 2.4 L27 0.4 V20.2 L24.6 22.4 Z" fill="#35bcd2"/><rect x="0.4" y="0.8" width="24.6" height="21.6" fill="#b3ecf4" stroke="#4cc6da" stroke-width="0.8"/>
<path d="M10.4 4.2 L20.6 6.4 L20.6 16.6 L10.4 19.8 L4.8 11.8 Z" fill="#27c4dc" stroke="#3aa0b8" stroke-width="0.6"/>
<circle cx="10.4" cy="4.2" r="1.35" fill="#fff" stroke="#8aa" stroke-width="0.4"/><circle cx="20.6" cy="6.4" r="1.35" fill="#fff" stroke="#8aa" stroke-width="0.4"/><circle cx="20.6" cy="16.6" r="1.35" fill="#fff" stroke="#8aa" stroke-width="0.4"/><circle cx="10.4" cy="19.8" r="1.35" fill="#fff" stroke="#8aa" stroke-width="0.4"/><circle cx="4.8" cy="11.8" r="1.35" fill="#fff" stroke="#8aa" stroke-width="0.4"/></g>
<g transform="translate(1087.5,49.6)"><path d="M24.6 2.4 L27 0.4 V20.2 L24.6 22.4 Z" fill="#35bcd2"/><rect x="0.4" y="0.8" width="24.6" height="21.6" fill="#b3ecf4" stroke="#4cc6da" stroke-width="0.8"/><path d="M2.00 1 V22" stroke="#2fb4cc" stroke-width="0.45"/><path d="M4.15 1 V22" stroke="#2fb4cc" stroke-width="0.45"/><path d="M6.30 1 V22" stroke="#2fb4cc" stroke-width="0.45"/><path d="M8.45 1 V22" stroke="#2fb4cc" stroke-width="0.45"/><path d="M10.60 1 V22" stroke="#2fb4cc" stroke-width="0.45"/><path d="M12.75 1 V22" stroke="#2fb4cc" stroke-width="0.45"/><path d="M14.90 1 V22" stroke="#2fb4cc" stroke-width="0.45"/><path d="M17.05 1 V22" stroke="#2fb4cc" stroke-width="0.45"/><path d="M19.20 1 V22" stroke="#2fb4cc" stroke-width="0.45"/><path d="M21.35 1 V22" stroke="#2fb4cc" stroke-width="0.45"/><path d="M23.50 1 V22" stroke="#2fb4cc" stroke-width="0.45"/><path d="M0.6 2.60 H24.8" stroke="#2fb4cc" stroke-width="0.45"/><path d="M0.6 4.70 H24.8" stroke="#2fb4cc" stroke-width="0.45"/><path d="M0.6 6.80 H24.8" stroke="#2fb4cc" stroke-width="0.45"/><path d="M0.6 8.90 H24.8" stroke="#2fb4cc" stroke-width="0.45"/><path d="M0.6 11.00 H24.8" stroke="#2fb4cc" stroke-width="0.45"/><path d="M0.6 13.10 H24.8" stroke="#2fb4cc" stroke-width="0.45"/><path d="M0.6 15.20 H24.8" stroke="#2fb4cc" stroke-width="0.45"/><path d="M0.6 17.30 H24.8" stroke="#2fb4cc" stroke-width="0.45"/><path d="M0.6 19.40 H24.8" stroke="#2fb4cc" stroke-width="0.45"/><path d="M0.6 21.50 H24.8" stroke="#2fb4cc" stroke-width="0.45"/></g>
<g transform="translate(1158.7,50.4)">
<path d="M0.4 2.4 L2 0.5 H8.2 L6.6 2.4 Z" fill="#27c0d8"/><path d="M6.6 2.4 L8.2 0.5 V18.6 L6.6 20.6 Z" fill="#1fa6c4"/>
<rect x="0.4" y="2.4" width="6.2" height="18.2" fill="#b3ecf4" stroke="#25b6d2" stroke-width="0.9"/>
<rect x="2.2" y="4.4" width="2.5" height="14.2" fill="#fff" stroke="#1a7f9a" stroke-width="0.5"/>
<path d="M9.3 10.8 H16.2 M9.3 14.6 H16.2" stroke="#33d2ea" stroke-width="2"/>
<rect x="18.6" y="7.6" width="5.4" height="13" rx="0.6" fill="#f9c862"/><rect x="22.4" y="7.6" width="1.6" height="13" fill="#eeb048"/>
<path d="M16.4 2.8 L18.6 0.4 H27.2 L25 2.8 Z" fill="#27c0d8"/><path d="M25 2.8 L27.2 0.4 V5.4 L25 7.8 Z" fill="#1fa6c4"/>
<rect x="16.4" y="2.8" width="8.6" height="5" fill="#b3ecf4" stroke="#5fcfe0" stroke-width="0.5"/>
</g>
<g transform="translate(1288.8,61.3)">
<circle r="11" fill="none" stroke="#9a9a9a" stroke-width="0.7"/>
<circle r="9.6" fill="none" stroke="#b8b8b8" stroke-width="0.6"/>
<path d="M-4.5 -9.2 A10.2 10.2 0 0 1 9.4 4.2" fill="none" stroke="#a8a832" stroke-width="1.7"/>
<circle r="8.2" fill="#f2f254"/>
<path d="M-13 0 H13 M0 -13 V13" stroke="#8a8a70" stroke-width="0.6" stroke-dasharray="2.2 1.2"/>
<path d="M0 0 L5.5 -5.5" stroke="#d8d860" stroke-width="0.8"/>
<path d="M7.5 -8.5 L11 -12.4" stroke="#707070" stroke-width="0.6"/><path d="M9.8 -14.6 H13.2 L11.5 -12 Z" fill="#505050"/>
</g>
<g transform="translate(1338.8,47.1)">
<rect x="6" y="7" width="4.6" height="8" fill="#f9a898"/><rect x="9.2" y="7" width="1.4" height="8" fill="#ee8878"/>
<rect x="15.2" y="7" width="4.6" height="8" fill="#f9a898"/><rect x="18.4" y="7" width="1.4" height="8" fill="#ee8878"/>
<path d="M0.4 2.8 L3 0.3 H27.5 L25 2.8 Z" fill="#b9c92c"/><path d="M25 2.8 L27.5 0.3 V5 L25 7.4 Z" fill="#a3b322"/>
<rect x="0.4" y="2.8" width="24.6" height="4.6" fill="#d4e444"/>
<path d="M0.4 15.6 L3 13.2 H27.5 L25 15.6 Z" fill="#b9c92c"/><path d="M25 15.6 L27.5 13.2 V24.6 L25 27.2 Z" fill="#a3b322"/>
<rect x="0.4" y="15.6" width="24.6" height="11.6" fill="#d4e444"/>
<rect x="3" y="17.4" width="20" height="7.2" fill="#fff"/>
<rect x="3" y="17.4" width="2.2" height="7.2" fill="#d4e444"/><rect x="11.6" y="17.4" width="3" height="7.2" fill="#e3ee7a"/><rect x="21" y="17.4" width="2" height="7.2" fill="#e3ee7a"/>
<path d="M5.6 17.4 V25 M14.6 17.4 V25" stroke="#b0b0b0" stroke-width="1.4"/>
<path d="M0.4 25.4 H25" stroke="#c9d938" stroke-width="2.6"/>
</g>
<g transform="translate(1374,47.1)">
<rect x="10" y="1.6" width="15.6" height="17.4" rx="1.2" fill="#ffc9ba" stroke="#c8c8c8" stroke-width="0.8"/>
<path d="M23.6 3.4 L26.4 1.6 V17 L23.6 19 Z" fill="#ff7040"/>
<path d="M0.3 0.3 H6.6 V21.2 H27.6 V27.2 H0.3 Z" fill="#d2e23e" stroke="#b6c62a" stroke-width="0.6"/>
<path d="M4.6 3 H6.4 M4.6 6 H6.4 M4.6 9 H6.4 M4.6 12 H6.4 M4.6 15 H6.4 M4.6 18 H6.4 M9 21.4 V23.2 M12 21.4 V23.2 M15 21.4 V23.2 M18 21.4 V23.2 M21 21.4 V23.2 M24 21.4 V23.2" stroke="#a4b41e" stroke-width="0.6"/>
<rect x="1.6" y="22.6" width="2.8" height="3" fill="none" stroke="#8e9e18" stroke-width="0.7"/>
</g>
<g transform="translate(419.3,86.2)"><path d="M0.3 16.5 L3.4 13.3 H27.5 L24 16.5 Z" fill="#6e80ea"/><path d="M24 16.5 L27.5 13.3 V23.700000000000003 L24 27.3 Z" fill="#4d5cc4"/><rect x="0.3" y="16.5" width="23.7" height="10.8" fill="#8696f2"/><rect x="3.2" y="17.6" width="19" height="5.6" fill="#fff"/><rect x="11" y="17.6" width="6" height="7.6" fill="#fff"/><rect x="9.8" y="17.6" width="1.6" height="6" fill="#9a9aa8"/><path d="M0.3 25.6 H24" stroke="#7a8af0" stroke-width="3.2"/><rect x="10.4" y="6.6" width="6" height="8.2" rx="0.8" fill="#f9b446"/><rect x="14.4" y="6.6" width="2" height="8.2" fill="#e89428"/><path d="M0.3 3.2 L3.4 0 H27.5 L24 3.2 Z" fill="#6e80ea"/><path d="M24 3.2 L27.5 0 V3.8000000000000003 L24 7.4 Z" fill="#4d5cc4"/><rect x="0.3" y="3.2" width="23.7" height="4.2" fill="#a9b6f4"/></g>
<g transform="translate(455.1,86.2)"><path d="M0.3 16.5 L3.4 13.3 H27.5 L24 16.5 Z" fill="#6e80ea"/><path d="M24 16.5 L27.5 13.3 V23.700000000000003 L24 27.3 Z" fill="#4d5cc4"/><rect x="0.3" y="16.5" width="23.7" height="10.8" fill="#8696f2"/><rect x="3.2" y="17.6" width="19" height="5.6" fill="#fff"/><rect x="6.2" y="17.6" width="6" height="7.6" fill="#fff"/><rect x="5.0" y="17.6" width="1.6" height="6" fill="#9a9aa8"/><rect x="15.4" y="17.6" width="6" height="7.6" fill="#fff"/><rect x="14.200000000000001" y="17.6" width="1.6" height="6" fill="#9a9aa8"/><path d="M0.3 25.6 H24" stroke="#7a8af0" stroke-width="3.2"/><rect x="5.6000000000000005" y="6.6" width="6" height="8.2" rx="0.8" fill="#f9b446"/><rect x="9.6" y="6.6" width="2" height="8.2" fill="#e89428"/><rect x="14.8" y="6.6" width="6" height="8.2" rx="0.8" fill="#f9b446"/><rect x="18.8" y="6.6" width="2" height="8.2" fill="#e89428"/><path d="M0.3 3.2 L3.4 0 H27.5 L24 3.2 Z" fill="#6e80ea"/><path d="M24 3.2 L27.5 0 V3.8000000000000003 L24 7.4 Z" fill="#4d5cc4"/><rect x="0.3" y="3.2" width="23.7" height="4.2" fill="#a9b6f4"/></g>
<g transform="translate(526.2,86.2)"><path d="M0.3 16.5 L3.4 13.3 H27.5 L24 16.5 Z" fill="#6e80ea"/><path d="M24 16.5 L27.5 13.3 V23.700000000000003 L24 27.3 Z" fill="#4d5cc4"/><rect x="0.3" y="16.5" width="23.7" height="10.8" fill="#8696f2"/><rect x="3.2" y="17.2" width="19" height="5.2" fill="#fff"/><path d="M4.4 18 V21 M9.6 18 V21 M13.4 18.5 V20 M17.4 18.5 V20 M21.6 18 V21" stroke="#b8bcc8" stroke-width="1.2"/><path d="M0.3 25.6 H24" stroke="#7a8af0" stroke-width="3.2"/><path d="M4.4 7 V14.6 M9.6 7 V14.6 M21.6 7 V14.6" stroke="#f9c820" stroke-width="2.2"/><path d="M13.4 9.6 V12 M17.4 9.6 V12" stroke="#f9c820" stroke-width="2"/><path d="M0.3 3.2 L3.4 0 H27.5 L24 3.2 Z" fill="#6e80ea"/><path d="M24 3.2 L27.5 0 V3.8000000000000003 L24 7.4 Z" fill="#4d5cc4"/><rect x="0.3" y="3.2" width="23.7" height="4.2" fill="#a9b6f4"/></g>
<g transform="translate(561.6,87.8)"><path d="M3 22.6 L10 16 H27.5 L21 22.6 Z" fill="#dfe2f6"/><rect x="9" y="0.4" width="18.8" height="15.8" fill="#8a9aff"/><path d="M0.2 6.4 L7 0.8 V16.8 L0.2 22.4 Z" fill="#5b6bca"/><path d="M7.6 10.2 L11.4 6.6 H23.6 L19.8 10.2 Z" fill="#7d8df2"/><path d="M19.8 10.2 L23.6 6.6 V17.6 L19.8 21.4 Z" fill="#3f4fae"/><rect x="7.6" y="10.2" width="12.2" height="11.2" fill="#c9cdea" stroke="#6a72a8" stroke-width="0.5"/><circle cx="13.8" cy="13.4" r="1.7" fill="#1fe0e6"/><circle cx="11.2" cy="17.8" r="1.7" fill="#1fe0e6"/><circle cx="16.2" cy="17.8" r="1.7" fill="#1fe0e6"/><circle cx="21.8" cy="12.4" r="0.9" fill="#f0a030"/><circle cx="21.8" cy="16.2" r="0.9" fill="#f0a030"/><ellipse cx="15.6" cy="8.4" rx="1.4" ry="0.7" fill="#e8e8f0"/></g>
<g transform="translate(597,87.8)"><path d="M3 22.6 L10 16 H27.5 L21 22.6 Z" fill="#dfe2f6"/><rect x="9" y="0.4" width="18.8" height="15.8" fill="#8a9aff"/><path d="M0.2 6.4 L7 0.8 V16.8 L0.2 22.4 Z" fill="#5b6bca"/><path d="M7.6 10.2 L11.4 6.6 H23.6 L19.8 10.2 Z" fill="#7d8df2"/><path d="M19.8 10.2 L23.6 6.6 V17.6 L19.8 21.4 Z" fill="#3f4fae"/><rect x="7.6" y="10.2" width="12.2" height="11.2" fill="#c9cdea" stroke="#6a72a8" stroke-width="0.5"/></g>
<g transform="translate(632.8,86.4)">
<path d="M0.2 26 L5.4 18 H27.4 L21 26 Z" fill="#7282d8"/>
<path d="M6.4 4.6 L10 0.8 H22 L18.6 4.6 Z" fill="#7d8df2"/>
<path d="M18.6 4.6 L22 0.8 V11.4 L18.6 15 Z" fill="#4f5fc2"/>
<rect x="6.4" y="4.6" width="12.2" height="10.4" fill="#c9cdea" stroke="#7a82b8" stroke-width="0.5"/>
<path d="M5 10.4 V19.4 M12.2 12 V21.6 M19.4 10.4 V19" stroke="#f9c830" stroke-width="1.4"/>
<path d="M3.2 18.4 H6.8 L5 21.4 Z M10.4 20.6 H14 L12.2 23.8 Z M17.6 18 H21.2 L19.4 21 Z" fill="#f9c830"/>
</g>
<g transform="translate(675.8,101.2)"><path d="M0 0 C-5.6 -6 -4.6 -12.6 0 -12.6 C4.6 -12.6 5.6 -6 0 0 Z" fill="#5868c4"/><circle cx="0" cy="-8" r="1.7" fill="#f0f0f0"/></g>
<g transform="translate(688.6,110.4)"><path d="M0 0 C-5.6 -6 -4.6 -12.6 0 -12.6 C4.6 -12.6 5.6 -6 0 0 Z" fill="#8a9aff"/><circle cx="0" cy="-8" r="1.7" fill="#f0f0f0"/></g>
<g transform="translate(0,0)"><circle cx="711.8" cy="91.7" r="3" fill="#b09a12"/><path d="M711.8 108.4 L724 99.9" stroke="#5050d0" stroke-width="1.3"/><circle cx="711.8" cy="108.4" r="3.1" fill="#4040d2"/><circle cx="724" cy="99.9" r="3.1" fill="#4040d2"/></g>
<g transform="translate(0,0)"><path d="M747.2 91.7 L759.6 99.9 L747.2 108.4" fill="none" stroke="#c0a832" stroke-width="1.3"/><circle cx="747.2" cy="91.7" r="3.1" fill="#4040d2"/><circle cx="759.6" cy="99.9" r="3.1" fill="#4040d2"/><circle cx="747.2" cy="108.4" r="3.1" fill="#4040d2"/></g>
<g transform="translate(789,99.9)"><path d="M0 -10.4 L9.9 -5 L9.9 5 L0 10.4 L-9.9 5 L-9.9 -5 Z" fill="none" stroke="#6070d4" stroke-width="0.9"/><path d="M0 0 L0 -10.4" stroke="#6070d4" stroke-width="0.8"/><path d="M0 0 L9.9 -5" stroke="#6070d4" stroke-width="0.8"/><path d="M0 0 L9.9 5" stroke="#6070d4" stroke-width="0.8"/><path d="M0 0 L0 10.4" stroke="#6070d4" stroke-width="0.8"/><path d="M0 0 L-9.9 5" stroke="#6070d4" stroke-width="0.8"/><path d="M0 0 L-9.9 -5" stroke="#6070d4" stroke-width="0.8"/><circle cx="0" cy="-10.4" r="1.9" fill="#5666cc"/><circle cx="9.9" cy="-5" r="1.9" fill="#5666cc"/><circle cx="9.9" cy="5" r="1.9" fill="#5666cc"/><circle cx="0" cy="10.4" r="1.9" fill="#5666cc"/><circle cx="-9.9" cy="5" r="1.9" fill="#5666cc"/><circle cx="-9.9" cy="-5" r="1.9" fill="#5666cc"/><circle r="2.3" fill="#ffb458"/></g>
<g transform="translate(0,0)"><path d="M814.9 90 V101.5 M823.9 90 V101.5 M814.9 95.6 H823.9" stroke="#5a6ac8" stroke-width="1.7" fill="none"/><path d="M826.4 97.2 L828.4 96.2 V101.5" stroke="#5a6ac8" stroke-width="1.4" fill="none"/><path d="M812.5 105.1 H836.5" stroke="#f9b830" stroke-width="1.9"/><path d="M812.5 109.7 H833" stroke="#6474d4" stroke-width="1.5"/></g>
<g transform="translate(895.7,85.9)"><path d="M14 0 V27.4" stroke="#a0a0a8" stroke-width="1.2"/><path d="M6 16 V23 A7.9 2.6 0 0 0 21.8 23 V16 Z" fill="#c3c9ee" stroke="#9aa0d0" stroke-width="0.5"/><ellipse cx="13.9" cy="16" rx="7.9" ry="2.6" fill="#8292f2"/><path d="M6 5.6 V11.4 A7.9 2.6 0 0 0 21.8 11.4 V5.6 Z" fill="#c3c9ee" stroke="#9aa0d0" stroke-width="0.5"/><ellipse cx="13.9" cy="5.6" rx="7.9" ry="2.6" fill="#8292f2"/><path d="M14 0 V5.4" stroke="#a0a0a8" stroke-width="1.2"/><path d="M1.6 8.4 C0.6 5 3.4 2.2 6.6 1.8" fill="none" stroke="#f9b020" stroke-width="2.6"/><path d="M5.4 -0.6 L9 2.2 L5.6 4.4 Z" fill="#f9b020"/><path d="M26 19.4 C27 23 24.4 25.4 21 25.8" fill="none" stroke="#f9b020" stroke-width="2.6"/><path d="M22.2 28.2 L18.6 25.4 L22 23.2 Z" fill="#f9b020"/></g>
<g transform="translate(931.7,85.9)"><path d="M11.4 0 V27.4" stroke="#a0a0a8" stroke-width="1.2"/><path d="M16.6 0 V27.4" stroke="#a0a0a8" stroke-width="1.2"/><path d="M6 16 V23 A7.9 2.6 0 0 0 21.8 23 V16 Z" fill="#c3c9ee" stroke="#9aa0d0" stroke-width="0.5"/><ellipse cx="13.9" cy="16" rx="7.9" ry="2.6" fill="#8292f2"/><path d="M6 5.6 V11.4 A7.9 2.6 0 0 0 21.8 11.4 V5.6 Z" fill="#c3c9ee" stroke="#9aa0d0" stroke-width="0.5"/><ellipse cx="13.9" cy="5.6" rx="7.9" ry="2.6" fill="#8292f2"/><path d="M11.4 0 V5.4" stroke="#a0a0a8" stroke-width="1.2"/><path d="M16.6 0 V5.4" stroke="#a0a0a8" stroke-width="1.2"/><path d="M1.6 8.4 C0.6 5 3.4 2.2 6.6 1.8" fill="none" stroke="#22c444" stroke-width="2.6"/><path d="M5.4 -0.6 L9 2.2 L5.6 4.4 Z" fill="#22c444"/><path d="M26 19.4 C27 23 24.4 25.4 21 25.8" fill="none" stroke="#22c444" stroke-width="2.6"/><path d="M22.2 28.2 L18.6 25.4 L22 23.2 Z" fill="#22c444"/></g>
<g transform="translate(980.4,99.9)"><path d="M0 0 L0 -10.4" stroke="#8a96e0" stroke-width="1.1"/><path d="M0 0 L9.9 -5" stroke="#8a96e0" stroke-width="1.1"/><path d="M0 0 L9.9 4.9" stroke="#8a96e0" stroke-width="1.1"/><path d="M0 0 L0 10.2" stroke="#8a96e0" stroke-width="1.1"/><path d="M0 0 L-9.9 4.9" stroke="#8a96e0" stroke-width="1.1"/><path d="M0 0 L-9.9 -5" stroke="#8a96e0" stroke-width="1.1"/><circle cx="0" cy="-10.4" r="2.1" fill="#5666cc"/><circle cx="9.9" cy="-5" r="2.1" fill="#5666cc"/><circle cx="9.9" cy="4.9" r="2.1" fill="#5666cc"/><circle cx="0" cy="10.2" r="2.1" fill="#5666cc"/><circle cx="-9.9" cy="4.9" r="2.1" fill="#5666cc"/><circle cx="-9.9" cy="-5" r="2.1" fill="#5666cc"/><circle r="2.9" fill="#22b04e"/></g>
<g transform="translate(0,0)"><circle cx="1056.2" cy="99.9" r="2.9" fill="#f0a020"/><path d="M1061 98 H1069.4 V92.8 L1077.6 99.9 L1069.4 107 V101.8 H1061 Z" fill="#f0a020"/></g>
<g transform="translate(1101,99.9)"><circle r="13.3" fill="#fff" stroke="#a89888" stroke-width="0.9"/>
<path d="M-6 -12.2 A13.6 13.6 0 0 1 13.4 -2" fill="none" stroke="#cf9234" stroke-width="1.6"/>
<path d="M-12 0.7 H12" stroke="#98a2f0" stroke-width="0.9"/><path d="M-13 0.7 L-10 -0.8 V2.2 Z M13 0.7 L10 -0.8 V2.2 Z" fill="#6070e0"/></g>
<g transform="translate(1122.9,88.7)"><rect x="0.4" y="0.4" width="27" height="21.4" fill="#ffd084" stroke="#e8a850" stroke-width="0.8"/><path d="M26.6 0.8 V21.6" stroke="#e09a40" stroke-width="1.2"/>
<path d="M1.6 12 H26" stroke="#fff" stroke-width="1.6"/><path d="M4.6 12 H23.4" stroke="#5a62a8" stroke-width="0.9"/>
<path d="M4.2 9.4 V14.6 M23.8 9.4 V14.6" stroke="#5a62a8" stroke-width="0.7"/><path d="M4.2 12 L7 10.6 V13.4 Z M23.8 12 L21 10.6 V13.4 Z" fill="#5058a0"/></g>
<g transform="translate(0,0)"><path d="M1159 98.2 L1185.7 88.7 M1162 104.2 L1185.7 110.8" stroke="#f9c030" stroke-width="1.5"/><path d="M1173.2 93.4 V107.2" stroke="#f9c040" stroke-width="1.9"/></g>
<g transform="translate(1197,86.5)"><path d="M0.3 8.6 L8.4 0.4 V18.6 L0.3 26.8 Z" fill="#ffd084" stroke="#dca250" stroke-width="0.7"/>
<path d="M5 5.4 H14 M5 12.8 H14 M5 20 H14" stroke="#8a92e6" stroke-width="0.8"/>
<path d="M4.4 5.4 L7 4 V6.8 Z M4.4 12.8 L7 11.4 V14.2 Z M4.4 20 L7 18.6 V21.4 Z" fill="#6068d0"/>
<path d="M13.4 7.6 L21.8 0.2 V18.2 L13.4 26.8 Z" fill="#f88000" stroke="#e07000" stroke-width="0.5"/></g>
<g transform="translate(0,0)"><path d="M1244.8 86.6 L1232.4 109.6 H1257" fill="none" stroke="#f0a020" stroke-width="2.2" stroke-linejoin="miter"/><path d="M1233.6 99.4 C1240 100.6 1243.4 106 1243.2 113.6" fill="none" stroke="#f0a020" stroke-width="1.9"/></g>
<g transform="translate(1265.3,86.5)"><path d="M0.3 26.8 L4.4 11.6 H27 L15.4 26.8 Z" fill="#ffd084" stroke="#e0a050" stroke-width="0.6"/>
<path d="M0.3 26.8 L4.4 11.4 L15.8 0.2 L12.2 15 Z" fill="#ffa828" stroke="#e09028" stroke-width="0.5"/>
<path d="M4.4 13.6 C9 15.6 12.2 20 12.8 25.4" fill="none" stroke="#6068c0" stroke-width="0.8"/><rect x="3.4" y="12.6" width="1.8" height="1.8" fill="#5058b0"/><rect x="11.8" y="24.4" width="1.8" height="1.8" fill="#5058b0"/></g>
<g transform="translate(0,0)"><circle cx="1309.4" cy="104" r="7.9" fill="none" stroke="#34c274" stroke-width="1.6"/><circle cx="1319.6" cy="104" r="7.9" fill="none" stroke="#f0a070" stroke-width="1.4"/><path d="M1309.4 91 V103.6 M1321 91 V103.6" stroke="#9ac0f0" stroke-width="0.7"/><path d="M1310 92.6 H1320.6" stroke="#5a8ae0" stroke-width="0.8"/><path d="M1313 92.6 L1315.6 91.2 V94 Z M1317.4 92.6 L1320 91.2 V94 Z" fill="#4a7ae0"/></g>
<g transform="translate(0,0)"><rect x="1336.6" y="89.8" width="27.3" height="19.9" rx="9.9" fill="none" stroke="#c8c8c8" stroke-width="0.7"/><circle cx="1346.6" cy="99.8" r="9.9" fill="none" stroke="#d4d4d4" stroke-width="0.5"/><circle cx="1354" cy="99.8" r="9.9" fill="none" stroke="#d4d4d4" stroke-width="0.5"/><path d="M1350.3 90.9 C1358.2 95 1358.2 104.8 1350.3 108.9 C1342.4 104.8 1342.4 95 1350.3 90.9 Z" fill="#ffa224" stroke="#c88020" stroke-width="0.5"/><path d="M1345 99.9 H1355.6" stroke="#b07848" stroke-width="0.8"/><rect x="1344.2" y="98.8" width="1.6" height="2.2" fill="#404890"/><rect x="1354.8" y="98.8" width="1.6" height="2.2" fill="#404890"/></g>
<g transform="translate(0,0)"><circle cx="1386" cy="99.9" r="13.7" fill="none" stroke="#f9c468" stroke-width="1.1"/><circle cx="1387" cy="99.9" r="12.2" fill="none" stroke="#fbd48e" stroke-width="0.9"/><circle cx="1388" cy="99.9" r="9.6" fill="#f0a830"/><circle cx="1398.2" cy="99.9" r="0.9" fill="#f07090"/></g>
<radialGradient id="sph" cx="0.5" cy="0.32" r="0.75"><stop offset="0" stop-color="#5f5ff0"/><stop offset="0.55" stop-color="#6e72f4"/><stop offset="0.85" stop-color="#a4b4ff"/><stop offset="1" stop-color="#c2d0ff"/></radialGradient>
<radialGradient id="shd" cx="0.5" cy="0.5" r="0.5"><stop offset="0" stop-color="#000" stop-opacity="0.7"/><stop offset="0.6" stop-color="#000" stop-opacity="0.35"/><stop offset="1" stop-color="#000" stop-opacity="0"/></radialGradient>
<g transform="translate(433,138.3)"><ellipse cx="0" cy="9.6" rx="11.5" ry="3.6" fill="url(#shd)"/><circle r="10.9" fill="url(#sph)" stroke="#7a7ae8" stroke-width="0.5"/><rect x="-5.6" y="-5.4" width="3" height="10.8" rx="0.8" fill="#fff"/><path d="M-2.8 0 L4.4 -5.6 V5.6 Z" fill="#fff"/></g>
<g transform="translate(468.7,138.3)"><ellipse cx="0" cy="9.6" rx="11.5" ry="3.6" fill="url(#shd)"/><circle r="10.9" fill="url(#sph)" stroke="#7a7ae8" stroke-width="0.5"/><path d="M-6.6 0 L-0.4 -5.6 V5.6 Z M-0.6 0 L5.6 -5.6 V5.6 Z" fill="#fff"/></g>
<g transform="translate(504.3,138.3)"><ellipse cx="0" cy="9.6" rx="11.5" ry="3.6" fill="url(#shd)"/><circle r="10.9" fill="url(#sph)" stroke="#7a7ae8" stroke-width="0.5"/><path d="M6.6 0 L0.4 -5.6 V5.6 Z M0.6 0 L-5.6 -5.6 V5.6 Z" fill="#fff"/></g>
<g transform="translate(526.2,126.8)"><rect x="0.8" y="0.8" width="25.9" height="18" fill="#fff" stroke="#5f90ea" stroke-width="1.6"/>
<rect x="1.6" y="12.8" width="24.3" height="5.2" fill="#ffe196"/>
<path d="M3 15.4 H24" stroke="#fff4d0" stroke-width="0.8" stroke-dasharray="1.5 2.5"/>
<path d="M11.2 3.6 L17.6 7.4 L11.2 11.2 Z" fill="#74a2f2"/>
<circle cx="10.8" cy="13" r="1" fill="#8ab0f4"/><circle cx="19" cy="13" r="1" fill="#8ab0f4"/><circle cx="6.6" cy="15.4" r="1" fill="#8ab0f4"/><circle cx="15.2" cy="15.4" r="1" fill="#8ab0f4"/>
<rect x="11.4" y="19.6" width="4.6" height="3" fill="#6c9cf0"/><rect x="8.2" y="22.2" width="11" height="1.5" fill="#8ab4f6"/></g>
<g transform="translate(613.2,126.3)"><path d="M1 4.6 H21 V1.6 Q21 0.4 22.4 0.6 Q24 1 24 3 V17 Q24 19 22 19 H3 Q1 19 1 21 Z" fill="#fff" stroke="#36a2e2" stroke-width="1"/>
<path d="M1 6 V21 Q1 22.6 3 22.6 H21.4 Q23.6 22.4 23.8 19.4" fill="none" stroke="#36a2e2" stroke-width="1"/>
<path d="M21 4.6 V17" stroke="#8acaf0" stroke-width="0.7"/>
<path d="M7 9.6 H19.6" stroke="#b0b0b0" stroke-width="0.8"/><path d="M4 10 V17" stroke="#c8c8c8" stroke-width="1"/>
<path d="M6.4 13 H10 M6.4 14.8 H10 M12.6 13.4 H14" stroke="#808890" stroke-width="0.9"/>
<rect x="3" y="22.4" width="19" height="2.8" fill="#56688a"/><g transform="translate(6.4,4.4)"><path d="M0 0 L3.68 -0.75 L3.68 0.75 Z M0 0 L3.13 2.07 L2.07 3.13 Z M0 0 L0.74 3.68 L-0.75 3.68 Z M0 0 L-2.07 3.13 L-3.13 2.07 Z M0 0 L-3.68 0.74 L-3.68 -0.75 Z M0 0 L-3.13 -2.07 L-2.07 -3.13 Z M0 0 L-0.74 -3.68 L0.75 -3.68 Z M0 0 L2.07 -3.13 L3.13 -2.07 Z " fill="#22c08e"/><circle r="3" fill="#22c08e"/><circle r="1.50" fill="#2a3a48"/><circle r="0.54" fill="#fff"/></g></g>
<g transform="translate(0,0)"><path d="M647.5 134.5 H651.5 V139.5 H657.0 V143.5 H647.5 Z" fill="#00b0f8"/><path d="M663 125.2 H666.8 V130.7 H672 V134.5 H663 Z" fill="#62c8f8"/><path d="M665.3 143.5 H669.0 V149.0 H674.0999999999999 V152.7 H665.3 Z" fill="#62c8f8"/><path d="M654 135.6 L660 132.4 M657 145 L662.6 148" stroke="#f9b050" stroke-width="0.9" stroke-dasharray="1.6 0.8"/><path d="M661.8 131.4 L659.4 131 L660.6 133.6 Z M664.2 148.8 L661.6 149 L662.8 146.6 Z" fill="#f9a030"/></g>
<g transform="translate(0,0)"><path d="M688.3 131 V148 A7.65 2.4 0 0 0 703.6 148 V131 Z" fill="#92d24e" stroke="#78b840" stroke-width="0.5"/><ellipse cx="695.95" cy="131" rx="7.65" ry="2.4" fill="#b4e282" stroke="#88c450" stroke-width="0.5"/>
<path d="M683.4 142.8 L688.4 137.8 H708.6 L703.6 142.8 Z" fill="#c0201c"/><path d="M688.3 142.8 V144 H703.6 V142.8 Z" fill="#7aa83a" opacity="0.5"/></g>
<g transform="translate(717.5,125.2)"><path d="M1.4 6 H23.4 V3.6 Q23.6 2.4 25 2.6 Q27 3 27 5 V19 Q27 21 25 21 H3.4 Q1.4 21 1.4 23 Z" fill="#fff" stroke="#b9c93e" stroke-width="1"/>
<path d="M1.4 8 V23.6 Q1.4 25.4 3.4 25.4 H24 Q26.6 25.2 26.8 22" fill="none" stroke="#b9c93e" stroke-width="1"/>
<path d="M23.4 6 V19" stroke="#d4de80" stroke-width="0.7"/>
<path d="M3.4 0.2 H21.6 L3.4 19 Z M6.4 4.6 V11.6 L13.2 4.6 Z" fill="#f9b840" fill-rule="evenodd"/>
<path d="M3.4 1 H21" stroke="#9a7420" stroke-width="1.3" stroke-dasharray="1 1"/>
<rect x="9.6" y="23.8" width="15" height="3" fill="#f9b840"/><path d="M6.4 25.3 L9.6 23.8 V26.8 Z" fill="#3a4458"/><rect x="24.6" y="23.8" width="2" height="3" fill="#3a4458"/><g transform="translate(17.2,14.6)"><path d="M0 0 L4.29 -0.87 L4.29 0.87 Z M0 0 L3.65 2.42 L2.42 3.65 Z M0 0 L0.87 4.29 L-0.87 4.29 Z M0 0 L-2.42 3.65 L-3.65 2.42 Z M0 0 L-4.29 0.87 L-4.29 -0.87 Z M0 0 L-3.65 -2.42 L-2.42 -3.65 Z M0 0 L-0.87 -4.29 L0.87 -4.29 Z M0 0 L2.42 -3.65 L3.65 -2.42 Z " fill="#22c08e"/><circle r="3.5" fill="#22c08e"/><circle r="1.75" fill="#2a3a48"/><circle r="0.63" fill="#fff"/></g></g>
<g transform="translate(0,0)"><path d="M760.9 140 V128.2 H770.6 L776.9 134.4 V148.8 H772" fill="none" stroke="#00b8f8" stroke-width="2"/><path d="M770 128.2 V135 H776.9" fill="none" stroke="#00b8f8" stroke-width="1.6"/><path d="M755.4 146 H758.4 M759.6 146 H766.5" stroke="#80c840" stroke-width="1.7"/><path d="M764.6 141.6 L769.6 146 L764.6 150.4" fill="none" stroke="#80c840" stroke-width="1.9"/></g>
<g transform="translate(0,0)"><path d="M792.7 128.6 L800.4 134.8 V147.7 L792.7 140.2 Z" fill="#c8c8c8"/><path d="M806.3 134.8 L814.1 128 V140.2 L806.3 147.7 Z" fill="#40b0b0"/><path d="M803.3 126 V152" stroke="#40b0b0" stroke-width="0.9" stroke-dasharray="2 1.4"/></g>
<g transform="translate(838.1,138.9)"><path d="M0 -12 L10.4 -6 L10.4 6 L0 12 L-10.4 6 L-10.4 -6 Z" fill="none" stroke="#56bcc4" stroke-width="1.1"/><path d="M0 12 V1 M-10.4 -6 L-3 -1.6 M10.4 -6 L3 -1.6" stroke="#56bcc4" stroke-width="1"/><path d="M0 -7.4 L6.2 -3.8 V3.4 L0 7 L-6.2 3.4 V-3.8 Z" fill="none" stroke="#7fd0d6" stroke-width="0.7"/><circle cx="0" cy="-0.4" r="3.6" fill="none" stroke="#56bcc4" stroke-width="1"/><path d="M0 -0.4 V-4 M0 -0.4 L3 1.6 M0 -0.4 L-3 1.6" stroke="#56bcc4" stroke-width="0.8"/></g>
<g transform="translate(873.9,138.9)"><circle r="11" fill="none" stroke="#b0c030" stroke-width="1.5"/><circle cx="0" cy="-11" r="1.3" fill="#b0c030"/><circle cx="0" cy="11" r="1.3" fill="#b0c030"/><circle cx="-11" cy="0" r="1.3" fill="#b0c030"/><circle cx="11" cy="0" r="1.3" fill="#b0c030"/><path d="M-3.6 -7 L7.4 0 L-3.6 7 Z" fill="#40b0b0"/></g>
<path d="M411.4 596.8 L418 603.4 M418 596.8 L411.4 603.4" stroke="#20202c" stroke-width="1.2"/>
<g transform="translate(412.1,621.3)"><ellipse cx="5.4" cy="11.6" rx="4.6" ry="1.4" fill="#b8b8b8"/>
<path d="M0.2 0.6 L1.6 0 L4.6 5.8 L3 6.6 Z" fill="#d08828"/>
<path d="M2.6 6.4 L5 5.2 L6 7 L3.6 8.2 Z" fill="#d83818"/>
<path d="M3.4 8 L6 6.8 L10.6 10.2 C9 12 6 12.6 3.6 11.6 Z" fill="#f8d21c"/></g>
<text x="409.7" y="679.4" font-family="'Liberation Sans','Noto Sans CJK SC',sans-serif" font-size="12.2" fill="#6a6a6a">信</text>
<text x="409.7" y="695.3" font-family="'Liberation Sans','Noto Sans CJK SC',sans-serif" font-size="12.2" fill="#6a6a6a">息</text>
<g transform="translate(882.5,610.3)"><rect x="0.5" y="0.5" width="25" height="23.6" rx="2.4" fill="#fff" stroke="#9aa8a4" stroke-width="0.9"/><path d="M1 2.6 Q1 1 2.6 1 H23.4 Q25 1 25 2.6" fill="none" stroke="#6fb8a8" stroke-width="1.2"/><path d="M4 11.6 C8 5.4 16.6 5.4 21 11.6 C16.6 17.8 8 17.8 4 11.6 Z" fill="#fff" stroke="#8a9a98" stroke-width="0.8"/>
<circle cx="12.4" cy="11.4" r="4.3" fill="#5ec2b2"/><circle cx="12.4" cy="11.4" r="2" fill="#2a4a50"/><circle cx="11.4" cy="10.2" r="0.8" fill="#fff"/>
<circle cx="21" cy="21.6" r="4.6" fill="#fff" stroke="#8a9a98" stroke-width="0.8"/><path d="M21 18.8 V24.4 M18.2 21.6 H23.8" stroke="#5ec2b2" stroke-width="1.5"/></g>
<g transform="translate(918,610.8)"><rect x="0.5" y="0.5" width="25" height="23.6" rx="2.4" fill="#fff" stroke="#9aa8a4" stroke-width="0.9"/><path d="M1 2.6 Q1 1 2.6 1 H23.4 Q25 1 25 2.6" fill="none" stroke="#6fb8a8" stroke-width="1.2"/><path d="M3.6 10.4 C8 15.6 17 15.6 21.4 10.4 C17 11.8 8 11.8 3.6 10.4 Z" fill="#6fc0b0" stroke="#4a9a8c" stroke-width="0.6"/>
<path d="M5 13.6 L4.4 15 M8 15 L7.6 16.6 M12.4 15.8 V17.4 M17 15 L17.4 16.6 M20 13.6 L20.6 15" stroke="#8a9a98" stroke-width="0.6"/>
<circle cx="21.4" cy="20.6" r="4.6" fill="#fff" stroke="#8a9a98" stroke-width="0.8"/><path d="M18.6 20.6 H24.2" stroke="#9aa8a4" stroke-width="1.6"/></g>
<rect x="952.1" y="610" width="1" height="28" fill="#d2d2d2"/>
<g transform="translate(961,610.3)"><rect x="0" y="0" width="12.6" height="12.9" fill="#00b050"/><rect x="0" y="14.5" width="12.6" height="12.9" fill="#00b050"/><rect x="14.1" y="0" width="12.6" height="12.9" fill="#00b050"/><rect x="14.1" y="14.5" width="12.6" height="12.9" fill="#00b050"/></g>
<g transform="translate(997,610.3)"><rect x="0.5" y="0.5" width="11.8" height="12.2" fill="#f4f4f4" stroke="#34b872" stroke-width="1"/><rect x="0.5" y="14.7" width="11.8" height="12.2" fill="#f4f4f4" stroke="#34b872" stroke-width="1"/><rect x="13.7" y="0.5" width="11.8" height="12.2" fill="#f4f4f4" stroke="#34b872" stroke-width="1"/><rect x="13.7" y="14.7" width="11.8" height="12.2" fill="#f4f4f4" stroke="#34b872" stroke-width="1"/><path d="M12.9 0 V27.4 M0 13.7 H26" stroke="#8fd8b0" stroke-width="1.4"/></g>
<g transform="translate(1032.8,613)"><rect x="0" y="0" width="11.9" height="10.7" fill="#00b050"/><rect x="12.9" y="12.9" width="11" height="10.6" fill="#f2f2f2" stroke="#8fd8b0" stroke-width="1.2"/>
<path d="M14.6 1 C19 1 21.6 3.6 21.6 7" fill="none" stroke="#22e0e0" stroke-width="1.7"/><path d="M19.4 6 L24.4 6 L21.8 9.6 Z" fill="#22e0e0"/>
<path d="M9.6 22.6 C4.6 22.4 2.2 20 2 17" fill="none" stroke="#f83030" stroke-width="1.9"/><path d="M-1 18.4 L2 13.8 L5.2 18 Z" fill="#f83030"/></g>
<rect x="1101.1" y="610" width="1" height="28" fill="#d2d2d2"/>
<rect x="1106.4" y="607.5" width="34.6" height="32.4" fill="#bfdcf5" stroke="#8ec6fa" stroke-width="0.9"/>
<g transform="translate(1110.5,612.2)"><rect x="0.4" y="0.4" width="26.6" height="25.8" fill="#bcdaf2" stroke="#6a8a90" stroke-width="0.8"/><path d="M0.4 0.4 H14 C13 3 14 4.6 15.6 6.4 C13 8 11 10 9 12.4 C6 11.6 3 12 0.4 13.4 Z" fill="#7fd0c0"/><path d="M27 26.2 H13.4 C14.4 23.6 13.4 22 11.8 20.2 C14.4 18.6 16.4 16.6 18.4 14.2 C21.4 15 24.4 14.6 27 13.2 Z" fill="#fff"/><path d="M14 0.4 C13 3 14 4.6 15.6 6.4 M0.4 13.4 C3 12 6 11.6 9 12.4 M13.4 26.2 C14.4 23.6 13.4 22 11.8 20.2 M27 13.2 C24.4 14.6 21.4 15 18.4 14.2" fill="none" stroke="#6a8a90" stroke-width="0.6"/><circle cx="13.4" cy="14" r="6.9" fill="#fff" stroke="#9ab0b0" stroke-width="0.6"/><path d="M9.8 14 L12.4 16.8 L17.4 11.4" fill="none" stroke="#6fc8b8" stroke-width="1.9"/></g>
<g transform="translate(1145,610.9)"><rect x="0.4" y="0.4" width="26.6" height="25.8" fill="#a4f0e0" stroke="#3a8070" stroke-width="0.8"/><path d="M0.4 0.4 H14 C13 3 14 4.6 15.6 6.4 C13 8 11 10 9 12.4 C6 11.6 3 12 0.4 13.4 Z" fill="#7fd0c0"/><path d="M27 26.2 H13.4 C14.4 23.6 13.4 22 11.8 20.2 C14.4 18.6 16.4 16.6 18.4 14.2 C21.4 15 24.4 14.6 27 13.2 Z" fill="#86d8c8"/><path d="M14 0.4 C13 3 14 4.6 15.6 6.4 M0.4 13.4 C3 12 6 11.6 9 12.4 M13.4 26.2 C14.4 23.6 13.4 22 11.8 20.2 M27 13.2 C24.4 14.6 21.4 15 18.4 14.2" fill="none" stroke="#3a8070" stroke-width="0.6"/><circle cx="13.4" cy="14" r="6.9" fill="#fff" stroke="#9ab0b0" stroke-width="0.6"/><path d="M9.8 14 L12.4 16.8 L17.4 11.4" fill="none" stroke="#6fc8b8" stroke-width="1.9"/></g>
<rect x="1179.0" y="610" width="1" height="28" fill="#d2d2d2"/>
<path d="M1201 610.8 L1208.4 622 H1194 Z" fill="#fff" stroke="#4a8a7c" stroke-width="0.9"/><path d="M1201.6 611 L1208.6 621.6" stroke="#2a6a5c" stroke-width="1.3"/>
<rect x="1187.6" y="625" width="12.2" height="12.2" fill="#fff" stroke="#4a8a7c" stroke-width="0.9"/><path d="M1187.6 625.4 H1199.8 V637.2" fill="none" stroke="#2a6a5c" stroke-width="1.3"/>
<circle cx="1208.2" cy="631.3" r="6.2" fill="#fff" stroke="#4a8a7c" stroke-width="0.9"/><path d="M1208.2 625.1 A6.2 6.2 0 0 1 1208.2 637.5" fill="none" stroke="#2a6a5c" stroke-width="1.2"/>
<path d="M1229.3000000000002 619.6 A7.6 7 0 0 1 1244.5 619.6 Z" fill="#a0f0e0" stroke="#808888" stroke-width="0.8"/><path d="M1231.9 614.4 A7.6 7 0 0 1 1244.3000000000002 619.0" fill="none" stroke="#4a8a80" stroke-width="1.4"/><rect x="1223.4" y="622.2" width="11.2" height="13.2" fill="#86e0d0" stroke="#8a9090" stroke-width="0.8"/><rect x="1225.2" y="623" width="7.8" height="5.4" fill="#a8f4e6" stroke="#8a9090" stroke-width="0.5"/><circle cx="1243.7" cy="628.6" r="5.3" fill="#a0f0e0" stroke="#707878" stroke-width="0.9"/><path d="M1236.7 628.6 H1250.7 M1243.7 621.6 V635.6" stroke="#5a8a88" stroke-width="0.6"/><path d="M1241.7 623.8000000000001 V633.4 M1245.7 623.8000000000001 V633.4 M1238.9 626.6 H1248.5 M1238.9 630.6 H1248.5" stroke="#7ac8c0" stroke-width="0.5"/>
<path d="M1264.8000000000002 619.6 A7.6 7 0 0 1 1280.0 619.6 Z" fill="#a0f0e0" stroke="#808888" stroke-width="0.8"/><path d="M1267.4 614.4 A7.6 7 0 0 1 1279.8000000000002 619.0" fill="none" stroke="#4a8a80" stroke-width="1.4"/><circle cx="1278.8" cy="628.6" r="5.3" fill="#a0f0e0" stroke="#707878" stroke-width="0.9"/><path d="M1271.8 628.6 H1285.8 M1278.8 621.6 V635.6" stroke="#5a8a88" stroke-width="0.6"/><path d="M1276.8 623.8000000000001 V633.4 M1280.8 623.8000000000001 V633.4 M1274.0 626.6 H1283.6 M1274.0 630.6 H1283.6" stroke="#7ac8c0" stroke-width="0.5"/>
<rect x="1294" y="618.3" width="27.8" height="11.4" fill="#f9b828"/><rect x="1296.4" y="619.4" width="2" height="7.2" fill="#fff6dc"/><rect x="1302.0" y="619.4" width="2" height="3.6" fill="#fff6dc"/><rect x="1307.5" y="619.4" width="2" height="7.2" fill="#fff6dc"/><rect x="1313.1" y="619.4" width="2" height="3.6" fill="#fff6dc"/><rect x="1318.6" y="619.4" width="2" height="7.2" fill="#fff6dc"/>
<rect x="1331.3" y="612" width="24.6" height="24.4" rx="2.4" fill="none" stroke="#8fd8c8" stroke-width="2"/><path d="M1332.3 613 L1355 635.6" stroke="#8fd8c8" stroke-width="2.3"/><path d="M1332.3 627.6 L1340.4 635.8" stroke="#8fd8c8" stroke-width="2.3"/><path d="M1349.6 612.8 L1355.2 618.4" stroke="#8fd8c8" stroke-width="2.3"/><path d="M1341.8 619.2 H1349.6 M1345.7 619.2 V626.6" stroke="#8fd8c8" stroke-width="1.2"/>
<rect x="1368.9" y="624.4" width="4" height="8.8" fill="#8fd8c8"/><rect x="1374.4" y="615.2" width="4.2" height="18" fill="#8fd8c8"/><rect x="1380" y="621.4" width="4" height="11.8" fill="#8fd8c8"/><rect x="1385.4" y="627" width="4" height="6.2" fill="#8fd8c8"/><path d="M1368.6 633 L1389.4 620" stroke="#8a8a8a" stroke-width="0.9"/>
<rect x="1435.6" y="605" width="1.1" height="84.5" fill="#6e6e6e"/><rect x="1435.6" y="604.8" width="3" height="0.9" fill="#8a8a8a"/>
<g transform="translate(882.1,656.3)"><rect x="0.4" y="0.4" width="26.8" height="27" fill="#f4f4f4" stroke="#7a7a7a" stroke-width="0.7"/>
<path d="M0.4 9.4 H27 M0.4 18.4 H27 M9.4 0.4 V27.2 M18.4 0.4 V27.2" stroke="#dcdcdc" stroke-width="0.5"/>
<path d="M13.8 0.8 L18.6 6 H15.4 V9 H12.2 V6 H9 Z M13.8 27 L18.6 21.8 H15.4 V18.8 H12.2 V21.8 H9 Z M0.6 13.9 L5.8 9.2 V12.3 H8.6 V15.5 H5.8 V18.6 Z M27 13.9 L21.8 9.2 V12.3 H19 V15.5 H21.8 V18.6 Z" fill="#f86c3e"/>
<rect x="8.8" y="9" width="10" height="10" rx="1" fill="#fff" stroke="#a8a8a8" stroke-width="0.7"/></g>
<g transform="translate(931,671.6)"><path d="M0 -10.6 V-15 M-9.2 5.3 L-12.8 8.6 M9.2 5.3 L12.8 8.6" stroke="#f86c3e" stroke-width="0.7"/><circle cx="0" cy="-15.2" r="0.8" fill="#f86c3e"/><circle cx="-13" cy="8.8" r="0.8" fill="#f86c3e"/><circle cx="13" cy="8.8" r="0.8" fill="#f86c3e"/>
<path d="M0 -10.6 L9.2 -5.3 L0 0 L-9.2 -5.3 Z" fill="#ff7848"/><path d="M-9.2 -5.3 L0 0 V10.6 L-9.2 5.3 Z" fill="#ffc9ba"/><path d="M9.2 -5.3 L0 0 V10.6 L9.2 5.3 Z" fill="#ff7040"/></g>
<g transform="translate(957.3,656.4)"><path d="M0 22.8 L14.4 22.8 L19.4 18.6 L5 18.6 Z" fill="#f86c3e"/><path d="M0 8.8 H14.4 V22.8 H0 Z M5 4.6000000000000005 H19.4 V18.6 H5 Z M0 8.8 l5 -4.2 M14.4 8.8 l5 -4.2 M0 22.8 l5 -4.2 M14.4 22.8 l5 -4.2" fill="none" stroke="#5a5a5a" stroke-width="0.6"/><path d="M5 4.6000000000000005 V0.6000000000000005 M19.4 18.6 h4.4 M0 22.8 l-3.6 3.2" stroke="#f86c3e" stroke-width="0.7"/><circle cx="5" cy="0.20000000000000018" r="0.8" fill="#f86c3e"/><circle cx="24.2" cy="18.6" r="0.8" fill="#f86c3e"/><circle cx="-3.9" cy="26.3" r="0.8" fill="#f86c3e"/></g>
<g transform="translate(992.8,656.4)"><path d="M0 8.8 L14.4 8.8 L19.4 4.6000000000000005 L5 4.6000000000000005 Z" fill="#f86c3e"/><path d="M0 8.8 H14.4 V22.8 H0 Z M5 4.6000000000000005 H19.4 V18.6 H5 Z M0 8.8 l5 -4.2 M14.4 8.8 l5 -4.2 M0 22.8 l5 -4.2 M14.4 22.8 l5 -4.2" fill="none" stroke="#5a5a5a" stroke-width="0.6"/><path d="M5 4.6000000000000005 V0.6000000000000005 M19.4 18.6 h4.4 M0 22.8 l-3.6 3.2" stroke="#f86c3e" stroke-width="0.7"/><circle cx="5" cy="0.20000000000000018" r="0.8" fill="#f86c3e"/><circle cx="24.2" cy="18.6" r="0.8" fill="#f86c3e"/><circle cx="-3.9" cy="26.3" r="0.8" fill="#f86c3e"/></g>
<g transform="translate(1028.4,656.4)"><path d="M0 8.8 L5 4.6000000000000005 L5 18.6 L0 22.8 Z" fill="#f86c3e"/><path d="M0 8.8 H14.4 V22.8 H0 Z M5 4.6000000000000005 H19.4 V18.6 H5 Z M0 8.8 l5 -4.2 M14.4 8.8 l5 -4.2 M0 22.8 l5 -4.2 M14.4 22.8 l5 -4.2" fill="none" stroke="#5a5a5a" stroke-width="0.6"/><path d="M5 4.6000000000000005 V0.6000000000000005 M19.4 18.6 h4.4 M0 22.8 l-3.6 3.2" stroke="#f86c3e" stroke-width="0.7"/><circle cx="5" cy="0.20000000000000018" r="0.8" fill="#f86c3e"/><circle cx="24.2" cy="18.6" r="0.8" fill="#f86c3e"/><circle cx="-3.9" cy="26.3" r="0.8" fill="#f86c3e"/></g>
<g transform="translate(1063.9,656.4)"><path d="M14.4 8.8 L19.4 4.6000000000000005 L19.4 18.6 L14.4 22.8 Z" fill="#f86c3e"/><path d="M0 8.8 H14.4 V22.8 H0 Z M5 4.6000000000000005 H19.4 V18.6 H5 Z M0 8.8 l5 -4.2 M14.4 8.8 l5 -4.2 M0 22.8 l5 -4.2 M14.4 22.8 l5 -4.2" fill="none" stroke="#5a5a5a" stroke-width="0.6"/><path d="M5 4.6000000000000005 V0.6000000000000005 M19.4 18.6 h4.4 M0 22.8 l-3.6 3.2" stroke="#f86c3e" stroke-width="0.7"/><circle cx="5" cy="0.20000000000000018" r="0.8" fill="#f86c3e"/><circle cx="24.2" cy="18.6" r="0.8" fill="#f86c3e"/><circle cx="-3.9" cy="26.3" r="0.8" fill="#f86c3e"/></g>
<g transform="translate(1099.4,656.4)"><path d="M0 8.8 H14.4 V22.8 H0 Z" fill="#f86c3e"/><path d="M0 8.8 H14.4 V22.8 H0 Z M5 4.6000000000000005 H19.4 V18.6 H5 Z M0 8.8 l5 -4.2 M14.4 8.8 l5 -4.2 M0 22.8 l5 -4.2 M14.4 22.8 l5 -4.2" fill="none" stroke="#5a5a5a" stroke-width="0.6"/><path d="M5 4.6000000000000005 V0.6000000000000005 M19.4 18.6 h4.4 M0 22.8 l-3.6 3.2" stroke="#f86c3e" stroke-width="0.7"/><circle cx="5" cy="0.20000000000000018" r="0.8" fill="#f86c3e"/><circle cx="24.2" cy="18.6" r="0.8" fill="#f86c3e"/><circle cx="-3.9" cy="26.3" r="0.8" fill="#f86c3e"/></g>
<g transform="translate(1134.9,656.4)"><path d="M5 4.6000000000000005 H19.4 V18.6 H5 Z" fill="#f86c3e"/><path d="M0 8.8 H14.4 V22.8 H0 Z M5 4.6000000000000005 H19.4 V18.6 H5 Z M0 8.8 l5 -4.2 M14.4 8.8 l5 -4.2 M0 22.8 l5 -4.2 M14.4 22.8 l5 -4.2" fill="none" stroke="#5a5a5a" stroke-width="0.6"/><path d="M5 4.6000000000000005 V0.6000000000000005 M19.4 18.6 h4.4 M0 22.8 l-3.6 3.2" stroke="#f86c3e" stroke-width="0.7"/><circle cx="5" cy="0.20000000000000018" r="0.8" fill="#f86c3e"/><circle cx="24.2" cy="18.6" r="0.8" fill="#f86c3e"/><circle cx="-3.9" cy="26.3" r="0.8" fill="#f86c3e"/></g>
<g transform="translate(1166.7,656.5)"><path d="M0.3 6.2 L7.4 0.3 H27.4 L20.4 6.2 Z" fill="#ffc9ba" stroke="#6a5a56" stroke-width="0.6"/><path d="M20.4 6.2 L27.4 0.3 V20.6 L20.4 27.2 Z" fill="#ff7040" stroke="#6a5a56" stroke-width="0.6"/><rect x="0.3" y="6.2" width="20.1" height="21" fill="#ff8a68" stroke="#6a5a56" stroke-width="0.6"/></g>
<g transform="translate(1202.1,656.5)"><path d="M0.4 6.2 H20.4 V27.2 H0.4 Z M7.4 0.4 H27.4 V20.6 H7.4 Z M0.4 6.2 L7.4 0.4 M20.4 6.2 L27.4 0.4 M0.4 27.2 L7.4 20.6 M20.4 27.2 L27.4 20.6" fill="none" stroke="#ffb49c" stroke-width="0.8"/></g>
<g transform="translate(1237.7,656.5)"><path d="M0.3 6.2 L7.4 0.3 H27.4 L20.4 6.2 Z" fill="#ffd2c4"/><path d="M20.4 6.2 L27.4 0.3 V20.6 L20.4 27.2 Z" fill="#ff7040"/><rect x="0.3" y="6.2" width="20.1" height="21" fill="#ff8e6c"/></g>
</svg>
</body></html>
